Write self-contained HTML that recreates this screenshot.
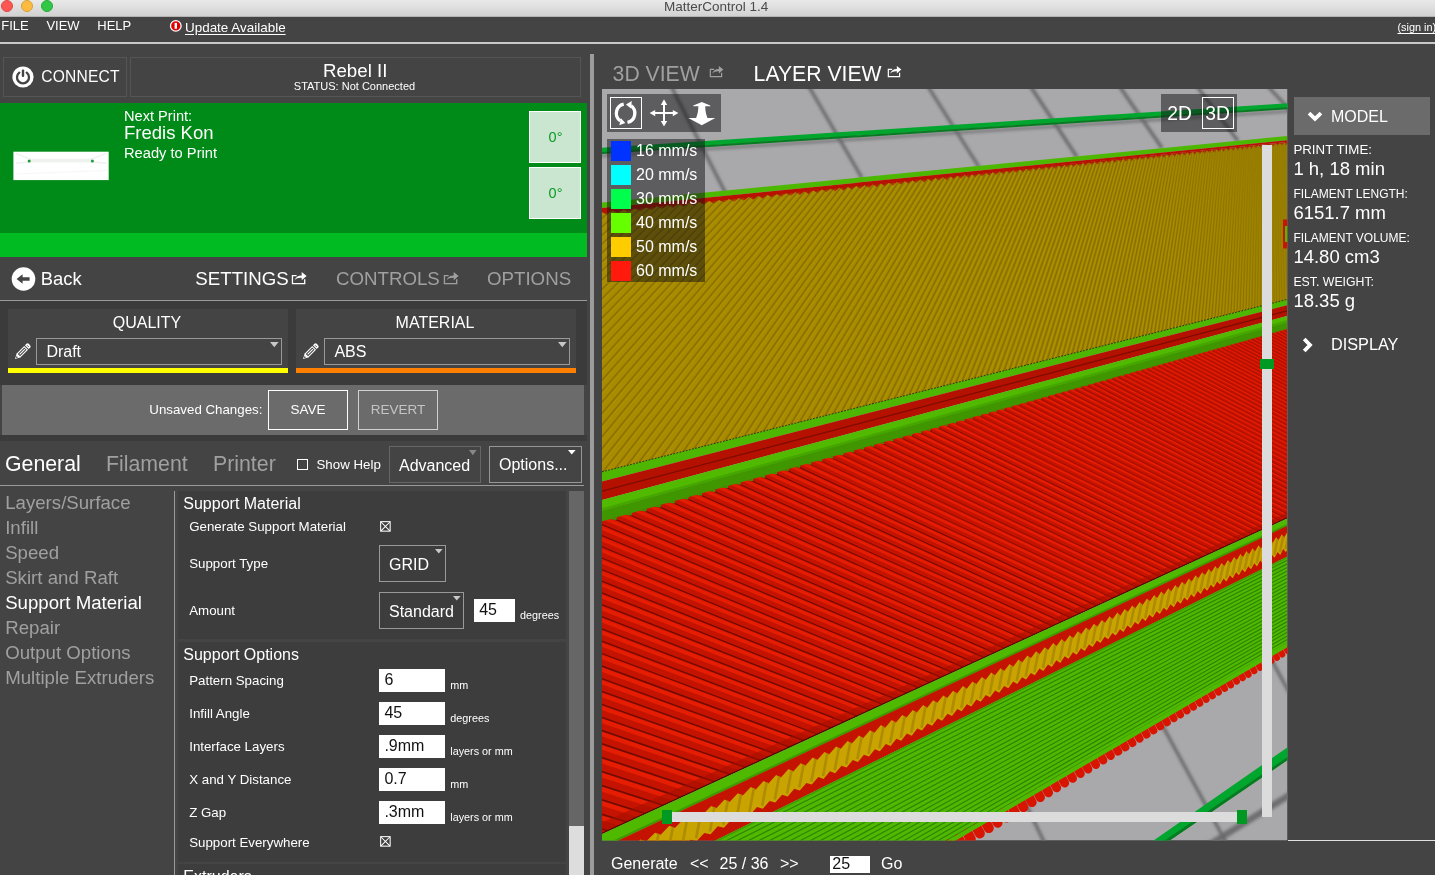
<!DOCTYPE html><html><head><meta charset="utf-8"><title>MatterControl 1.4</title><style>
html,body{margin:0;padding:0;}
body{width:1435px;height:875px;overflow:hidden;background:#444444;font-family:"Liberation Sans",sans-serif;position:relative;}
.t{position:absolute;white-space:nowrap;line-height:1;}
#root{position:absolute;left:0;top:0;width:1435px;height:875px;will-change:transform;}
.r{position:absolute;box-sizing:border-box;}
svg{position:absolute;overflow:visible;}
</style></head><body><div id="root">
<div class="r" style="left:0px;top:0px;width:1435px;height:17px;background:linear-gradient(#e9e9e9,#d2d2d2);border-bottom:1px solid #b4b4b4;height:17px;"></div>
<div class="r" style="left:0.7999999999999998px;top:-0.5px;width:12px;height:12px;border-radius:50%;background:#fc5753;border:0.5px solid #df4744;"></div>
<div class="r" style="left:20.8px;top:-0.5px;width:12px;height:12px;border-radius:50%;background:#fdbc40;border:0.5px solid #de9f34;"></div>
<div class="r" style="left:40.9px;top:-0.5px;width:12px;height:12px;border-radius:50%;background:#33c748;border:0.5px solid #27aa35;"></div>
<div class="t" style="left:416.2px;width:600px;text-align:center;top:-0.13px;font-size:13.5px;color:#4b4b4b;">MatterControl 1.4</div>
<div class="t" style="left:1.3px;top:19.00px;font-size:13px;color:#fff;">FILE</div>
<div class="t" style="left:46.4px;top:19.00px;font-size:13px;color:#fff;">VIEW</div>
<div class="t" style="left:97.3px;top:19.00px;font-size:13px;color:#fff;">HELP</div>
<svg style="left:169px;top:19px" width="14" height="14" viewBox="0 0 14 14"><circle cx="6.8" cy="6.9" r="5.3" fill="#e00000" stroke="#fff" stroke-width="1.3"/><rect x="5.6" y="3.9" width="2.4" height="5.9" fill="#fff"/></svg>
<div class="t" style="left:185.0px;top:20.81px;font-size:13.45px;color:#fff;text-decoration:underline;text-underline-offset:2px;">Update Available</div>
<div class="t" style="left:836.2px;width:600px;text-align:right;top:22.17px;font-size:10.9px;color:#fff;text-decoration:underline;text-underline-offset:1.5px;">(sign in)</div>
<div class="r" style="left:0px;top:42px;width:1435px;height:2px;background:#c8c8c8;"></div>
<div class="r" style="left:3px;top:57px;width:124px;height:40px;border:1px solid #555;"></div>
<div class="r" style="left:130px;top:57px;width:451px;height:40px;border:1px solid #555;"></div>
<svg style="left:11px;top:65px" width="24" height="24" viewBox="0 0 24 24"><circle cx="12" cy="12" r="10.6" fill="#fff"/><path d="M8.3 7.6 A6 6 0 1 0 15.7 7.6" fill="none" stroke="#444" stroke-width="2.3" stroke-linecap="round"/><rect x="10.8" y="4.6" width="2.4" height="7.4" rx="1" fill="#444"/></svg>
<div class="t" style="left:41.2px;top:69.39px;font-size:15.6px;color:#fff;letter-spacing:0.2px;">CONNECT</div>
<div class="t" style="left:55.2px;width:600px;text-align:center;top:62.17px;font-size:18.7px;color:#fff;">Rebel II</div>
<div class="t" style="left:54.5px;width:600px;text-align:center;top:80.69px;font-size:11px;color:#fff;">STATUS: Not Connected</div>
<div class="r" style="left:0px;top:103px;width:587px;height:130px;background:#008a17;"></div>
<div class="r" style="left:0px;top:233px;width:587px;height:24px;background:#00bc22;"></div>
<svg style="left:12px;top:150px" width="98" height="32" viewBox="0 0 98 32"><rect x="1.4" y="1.7" width="95.3" height="28.4" fill="#fff"/><path d="M3.5 3.200 L20 9.800 L78 9.800 L94.500 3.200" stroke="#edf0ed" stroke-width="1.2" fill="none"/><path d="M4 13.200 L22 11.500 L76 11.500 L94 13.200" stroke="#eef1ee" stroke-width="1.6" fill="none"/><path d="M3 24 L95 20.500" stroke="#f3f5f3" stroke-width="0.8" fill="none"/><rect x="18" y="8.600" width="62" height="3.600" fill="#f0f2f0" opacity="0.9"/><circle cx="17.200" cy="11" r="1.5" fill="#1e9a38"/><circle cx="80.400" cy="11" r="1.5" fill="#1e9a38"/></svg>
<div class="t" style="left:124.0px;top:108.54px;font-size:14.6px;color:#fff;">Next Print:</div>
<div class="t" style="left:124.0px;top:124.14px;font-size:18.5px;color:#fff;">Fredis Kon</div>
<div class="t" style="left:124.0px;top:145.56px;font-size:14.7px;color:#fff;">Ready to Print</div>
<div class="r" style="left:529px;top:111px;width:52px;height:52px;background:#cbe6d0;border:1px solid #fff;"></div>
<div class="t" style="left:255.5px;width:600px;text-align:center;top:130.23px;font-size:14.5px;color:#0a9a23;">0&deg;</div>
<div class="r" style="left:529px;top:167px;width:52px;height:52px;background:#cbe6d0;border:1px solid #fff;"></div>
<div class="t" style="left:255.5px;width:600px;text-align:center;top:186.23px;font-size:14.5px;color:#0a9a23;">0&deg;</div>
<div class="r" style="left:590px;top:54px;width:4.3px;height:821px;background:#9c9c9c;"></div>
<svg style="left:11px;top:267px" width="25" height="25" viewBox="0 0 25 25"><circle cx="12.5" cy="12" r="11.8" fill="#fff"/><path d="M5.6 12 L11.6 7.2 L11.6 10.3 L18.6 10.3 L18.6 13.7 L11.6 13.7 L11.6 16.8 Z" fill="#444"/></svg>
<div class="t" style="left:40.7px;top:270.12px;font-size:18.4px;color:#fff;">Back</div>
<div class="t" style="left:195.3px;top:269.87px;font-size:18.7px;color:#fff;">SETTINGS</div>
<div class="t" style="left:336.0px;top:269.87px;font-size:18.7px;color:#a0a0a0;">CONTROLS</div>
<div class="t" style="left:487.0px;top:269.87px;font-size:18.7px;color:#a0a0a0;">OPTIONS</div>
<svg style="left:291.4px;top:270.6px" width="17.0" height="14.0" viewBox="0 0 17 14"><path d="M5.6 4.65 H1.45 V12.55 H13.7 V8.3" fill="none" stroke="#fff" stroke-width="1.3"/><path d="M3.4 9.4 C4.4 6.2 7 4.5 10.7 4.4 V1 L15.6 4.9 L10.7 9.3 V6.9 C8 6.700 5.5 7.300 3.4 9.4 Z" fill="#fff"/></svg>
<svg style="left:442.6px;top:270.6px" width="17.0" height="14.0" viewBox="0 0 17 14"><path d="M5.6 4.65 H1.45 V12.55 H13.7 V8.3" fill="none" stroke="#a0a0a0" stroke-width="1.3"/><path d="M3.4 9.4 C4.4 6.2 7 4.5 10.7 4.4 V1 L15.6 4.9 L10.7 9.3 V6.9 C8 6.700 5.5 7.300 3.4 9.4 Z" fill="#a0a0a0"/></svg>
<div class="r" style="left:0px;top:300px;width:587px;height:1px;background:#9a9a9a;"></div>
<div class="r" style="left:0px;top:301px;width:587px;height:84px;background:#3b3b3b;"></div>
<div class="r" style="left:0px;top:435px;width:587px;height:6px;background:#3b3b3b;"></div>
<div class="r" style="left:8px;top:309px;width:280px;height:59px;background:#444444;"></div>
<div class="r" style="left:8px;top:368px;width:280px;height:5px;background:#ffff00;"></div>
<div class="t" style="left:-153.0px;width:600px;text-align:center;top:315.26px;font-size:16px;color:#fff;">QUALITY</div>
<div class="r" style="left:36px;top:338px;width:246px;height:27px;border:1px solid #999;"></div>
<div class="t" style="left:46.4px;top:343.66px;font-size:16px;color:#fff;">Draft</div>
<svg style="left:269.5px;top:342px" width="9" height="6" viewBox="0 0 9 6"><path d="M0 0 H8.6 L4.3 5.2 Z" fill="#c8c8c8"/></svg>
<svg style="left:15px;top:359.1px" width="1" height="1" viewBox="0 0 1 1"><g transform="rotate(45)"><path d="M0 0 L-2.7 -5.2 L2.7 -5.2 Z" fill="#fff"/><path d="M-1 -3.300 L0 -1.200 L1 -3.300 Z" fill="#444"/><rect x="-2.15" y="-15.2" width="4.3" height="10.2" fill="none" stroke="#fff" stroke-width="1.1"/><path d="M0 -14 V-6.5" stroke="#fff" stroke-width="1.1"/><path d="M-2.7 -16.700 H2.7 V-19 Q2.7 -20.5 0 -20.5 Q-2.7 -20.5 -2.7 -19 Z" fill="#fff"/><path d="M-1.200 -18.300 H1.200" stroke="#555" stroke-width="0.9"/></g></svg>
<div class="r" style="left:296px;top:309px;width:280px;height:59px;background:#444444;"></div>
<div class="r" style="left:296px;top:368px;width:280px;height:5px;background:#ff8000;"></div>
<div class="t" style="left:135.0px;width:600px;text-align:center;top:315.26px;font-size:16px;color:#fff;">MATERIAL</div>
<div class="r" style="left:324px;top:338px;width:246px;height:27px;border:1px solid #999;"></div>
<div class="t" style="left:334.4px;top:343.66px;font-size:16px;color:#fff;">ABS</div>
<svg style="left:557.5px;top:342px" width="9" height="6" viewBox="0 0 9 6"><path d="M0 0 H8.6 L4.3 5.2 Z" fill="#c8c8c8"/></svg>
<svg style="left:303px;top:359.1px" width="1" height="1" viewBox="0 0 1 1"><g transform="rotate(45)"><path d="M0 0 L-2.7 -5.2 L2.7 -5.2 Z" fill="#fff"/><path d="M-1 -3.300 L0 -1.200 L1 -3.300 Z" fill="#444"/><rect x="-2.15" y="-15.2" width="4.3" height="10.2" fill="none" stroke="#fff" stroke-width="1.1"/><path d="M0 -14 V-6.5" stroke="#fff" stroke-width="1.1"/><path d="M-2.7 -16.700 H2.7 V-19 Q2.7 -20.5 0 -20.5 Q-2.7 -20.5 -2.7 -19 Z" fill="#fff"/><path d="M-1.200 -18.300 H1.200" stroke="#555" stroke-width="0.9"/></g></svg>
<div class="r" style="left:2px;top:385px;width:582px;height:50px;background:#6b6b6b;"></div>
<div class="t" style="left:149.3px;top:402.74px;font-size:13.3px;color:#fff;">Unsaved Changes:</div>
<div class="r" style="left:268px;top:390px;width:80px;height:40px;border:1px solid #fff;"></div>
<div class="t" style="left:8.0px;width:600px;text-align:center;top:402.57px;font-size:13.5px;color:#fff;">SAVE</div>
<div class="r" style="left:358px;top:390px;width:80px;height:40px;border:1px solid #d0d0d0;"></div>
<div class="t" style="left:98.0px;width:600px;text-align:center;top:402.57px;font-size:13.5px;color:#c4c4c4;">REVERT</div>
<div class="t" style="left:5.0px;top:454.37px;font-size:21.3px;color:#fff;">General</div>
<div class="t" style="left:106.0px;top:454.37px;font-size:21.3px;color:#a0a0a0;">Filament</div>
<div class="t" style="left:213.0px;top:454.37px;font-size:21.3px;color:#a0a0a0;">Printer</div>
<div class="r" style="left:297px;top:459px;width:10.5px;height:10.5px;border:1px solid #fff;"></div>
<div class="t" style="left:316.5px;top:457.74px;font-size:13.3px;color:#fff;">Show Help</div>
<div class="r" style="left:389px;top:445.5px;width:92px;height:37px;border:1px solid #666;"></div>
<div class="t" style="left:399.0px;top:458.46px;font-size:16px;color:#fff;">Advanced</div>
<svg style="left:469.4px;top:450px" width="8" height="6" viewBox="0 0 8 6"><path d="M0 0 H7.6 L3.8 5.2 Z" fill="#888"/></svg>
<div class="r" style="left:489px;top:445.5px;width:92.5px;height:37px;border:1px solid #969696;"></div>
<div class="t" style="left:499.0px;top:456.96px;font-size:16px;color:#fff;">Options...</div>
<svg style="left:567.5px;top:449.5px" width="8" height="5" viewBox="0 0 8 5"><path d="M0 0 H7.6 L3.8 4.6 Z" fill="#fff"/></svg>
<div class="r" style="left:0px;top:485px;width:584px;height:1px;background:#9a9a9a;"></div>
<div class="t" style="left:5.2px;top:493.51px;font-size:18.65px;color:#a0a0a0;">Layers/Surface</div>
<div class="t" style="left:5.2px;top:518.51px;font-size:18.65px;color:#a0a0a0;">Infill</div>
<div class="t" style="left:5.2px;top:543.51px;font-size:18.65px;color:#a0a0a0;">Speed</div>
<div class="t" style="left:5.2px;top:568.51px;font-size:18.65px;color:#a0a0a0;">Skirt and Raft</div>
<div class="t" style="left:5.2px;top:593.51px;font-size:18.65px;color:#fff;">Support Material</div>
<div class="t" style="left:5.2px;top:618.51px;font-size:18.65px;color:#a0a0a0;">Repair</div>
<div class="t" style="left:5.2px;top:643.51px;font-size:18.65px;color:#a0a0a0;">Output Options</div>
<div class="t" style="left:5.2px;top:668.51px;font-size:18.65px;color:#a0a0a0;">Multiple Extruders</div>
<div class="r" style="left:173.8px;top:491px;width:1.4px;height:384px;background:#9a9a9a;"></div>
<div class="r" style="left:178px;top:491px;width:388px;height:148px;background:#3d3d3d;"></div>
<div class="r" style="left:178px;top:642px;width:388px;height:219.5px;background:#3d3d3d;"></div>
<div class="r" style="left:178px;top:864px;width:388px;height:11px;background:#3d3d3d;"></div>
<div class="t" style="left:183.3px;top:495.86px;font-size:16px;color:#fff;">Support Material</div>
<div class="t" style="left:183.3px;top:646.66px;font-size:16px;color:#fff;">Support Options</div>
<div class="t" style="left:183.3px;top:868.96px;font-size:16px;color:#fff;">Extruders</div>
<div class="t" style="left:189.2px;top:520.34px;font-size:13.3px;color:#fff;">Generate Support Material</div>
<svg style="left:379.5px;top:520.8px" width="11" height="11" viewBox="0 0 11 11"><rect x="0.65" y="0.65" width="9.5" height="9.5" fill="none" stroke="#fff" stroke-width="1.05"/><path d="M1 1 L9.8 9.8 M9.8 1 L1 9.8" stroke="#fff" stroke-width="1.05"/></svg>
<div class="t" style="left:189.2px;top:557.34px;font-size:13.3px;color:#fff;">Support Type</div>
<div class="r" style="left:379px;top:545px;width:67px;height:36.6px;border:1px solid #999;"></div>
<div class="t" style="left:389.0px;top:556.66px;font-size:16px;color:#fff;">GRID</div>
<svg style="left:434.5px;top:549px" width="8" height="5" viewBox="0 0 8 5"><path d="M0 0 H7.6 L3.8 4.6 Z" fill="#c8c8c8"/></svg>
<div class="t" style="left:189.2px;top:604.24px;font-size:13.3px;color:#fff;">Amount</div>
<div class="r" style="left:379px;top:592px;width:85px;height:36.6px;border:1px solid #999;"></div>
<div class="t" style="left:389.0px;top:603.66px;font-size:16px;color:#fff;">Standard</div>
<svg style="left:452.5px;top:596px" width="8" height="5" viewBox="0 0 8 5"><path d="M0 0 H7.6 L3.8 4.6 Z" fill="#c8c8c8"/></svg>
<div class="r" style="left:473.6px;top:598.7px;width:41.5px;height:23px;background:#fff;"></div>
<div class="t" style="left:479.2px;top:602.36px;font-size:16px;color:#111;">45</div>
<div class="t" style="left:520.1px;top:610.06px;font-size:10.8px;color:#fff;">degrees</div>
<div class="t" style="left:189.2px;top:673.94px;font-size:13.3px;color:#fff;">Pattern Spacing</div>
<div class="r" style="left:378.8px;top:668.7px;width:66.5px;height:23px;background:#fff;"></div>
<div class="t" style="left:384.4px;top:672.36px;font-size:16px;color:#111;">6</div>
<div class="t" style="left:450.3px;top:680.06px;font-size:10.8px;color:#fff;">mm</div>
<div class="t" style="left:189.2px;top:706.94px;font-size:13.3px;color:#fff;">Infill Angle</div>
<div class="r" style="left:378.8px;top:701.7px;width:66.5px;height:23px;background:#fff;"></div>
<div class="t" style="left:384.4px;top:705.36px;font-size:16px;color:#111;">45</div>
<div class="t" style="left:450.3px;top:713.06px;font-size:10.8px;color:#fff;">degrees</div>
<div class="t" style="left:189.2px;top:739.94px;font-size:13.3px;color:#fff;">Interface Layers</div>
<div class="r" style="left:378.8px;top:734.7px;width:66.5px;height:23px;background:#fff;"></div>
<div class="t" style="left:384.4px;top:738.36px;font-size:16px;color:#111;">.9mm</div>
<div class="t" style="left:450.3px;top:746.06px;font-size:10.8px;color:#fff;">layers or mm</div>
<div class="t" style="left:189.2px;top:772.94px;font-size:13.3px;color:#fff;">X and Y Distance</div>
<div class="r" style="left:378.8px;top:767.7px;width:66.5px;height:23px;background:#fff;"></div>
<div class="t" style="left:384.4px;top:771.36px;font-size:16px;color:#111;">0.7</div>
<div class="t" style="left:450.3px;top:779.06px;font-size:10.8px;color:#fff;">mm</div>
<div class="t" style="left:189.2px;top:805.94px;font-size:13.3px;color:#fff;">Z Gap</div>
<div class="r" style="left:378.8px;top:800.7px;width:66.5px;height:23px;background:#fff;"></div>
<div class="t" style="left:384.4px;top:804.36px;font-size:16px;color:#111;">.3mm</div>
<div class="t" style="left:450.3px;top:812.06px;font-size:10.8px;color:#fff;">layers or mm</div>
<div class="t" style="left:189.2px;top:835.74px;font-size:13.3px;color:#fff;">Support Everywhere</div>
<svg style="left:379.5px;top:836.3px" width="11" height="11" viewBox="0 0 11 11"><rect x="0.65" y="0.65" width="9.5" height="9.5" fill="none" stroke="#fff" stroke-width="1.05"/><path d="M1 1 L9.8 9.8 M9.8 1 L1 9.8" stroke="#fff" stroke-width="1.05"/></svg>
<div class="r" style="left:569.3px;top:491px;width:14.7px;height:384px;background:#666666;"></div>
<div class="r" style="left:569.3px;top:826px;width:14.7px;height:49px;background:#dddddd;"></div>
<div class="t" style="left:612.6px;top:62.85px;font-size:21.2px;color:#a0a0a0;">3D VIEW</div>
<svg style="left:709.3px;top:65.4px" width="15.64" height="12.88" viewBox="0 0 17 14"><path d="M5.6 4.65 H1.45 V12.55 H13.7 V8.3" fill="none" stroke="#a0a0a0" stroke-width="1.3"/><path d="M3.4 9.4 C4.4 6.2 7 4.5 10.7 4.4 V1 L15.6 4.9 L10.7 9.3 V6.9 C8 6.700 5.5 7.300 3.4 9.4 Z" fill="#a0a0a0"/></svg>
<div class="t" style="left:753.6px;top:62.85px;font-size:21.2px;color:#fff;">LAYER VIEW</div>
<svg style="left:887.2px;top:65.4px" width="15.64" height="12.88" viewBox="0 0 17 14"><path d="M5.6 4.65 H1.45 V12.55 H13.7 V8.3" fill="none" stroke="#fff" stroke-width="1.3"/><path d="M3.4 9.4 C4.4 6.2 7 4.5 10.7 4.4 V1 L15.6 4.9 L10.7 9.3 V6.9 C8 6.700 5.5 7.300 3.4 9.4 Z" fill="#fff"/></svg>
<svg style="left:602.0px;top:89.0px" width="685.5" height="751.5" viewBox="602.0 89.0 685.5 751.5">
<defs>
<clipPath id="vp"><rect x="602.0" y="89.0" width="685.5" height="751.5"/></clipPath>
<clipPath id="cy"><path d="M602 212.5 L1287 143 L1287 299.5 L602 471.8 Z"/></clipPath>
<clipPath id="cr"><path d="M602 521.2 L1287 328.7 L1287 518 L602 833.5 Z"/></clipPath>
<clipPath id="cg"><path d="M602 896.8 L1287 556.8 L1287 646.9 L602 1046.1 Z"/></clipPath>
<clipPath id="cyb"><path d="M602 848.2 L1287 526 L1287 556.8 L602 896.8 Z"/></clipPath>
<filter id="bl" x="-5%" y="-5%" width="110%" height="110%"><feGaussianBlur stdDeviation="1.5"/></filter>
<linearGradient id="gg" gradientUnits="userSpaceOnUse" x1="0" y1="0" x2="2.5" y2="10"><stop offset="0" stop-color="#57c200"/><stop offset="1" stop-color="#46a600"/></linearGradient>
<linearGradient id="rg" gradientUnits="userSpaceOnUse" x1="602.0" y1="700" x2="1287.0" y2="420"><stop offset="0" stop-color="#860e00"/><stop offset="1" stop-color="#b41200"/></linearGradient>
</defs>
<g clip-path="url(#vp)">
<rect x="602.0" y="89.0" width="685.5" height="751.5" fill="#a9a8ab"/>
<g filter="url(#bl)" stroke="#68686a" stroke-width="3.2" fill="none">
<path d="M670.5 85 L727 196"/>
<path d="M808 85 L862 178"/>
<path d="M927 85 L979 167"/>
<path d="M1029.6 85 L1077 157"/>
<path d="M1118.6 85 L1162 148"/>
<path d="M1196 85 L1238 141"/>
<path d="M1266.6 85 L1290 110"/>
<path d="M598 156 L1290 111.2" stroke-width="2.6" opacity="0.8"/>
<path d="M1154 710 L1228 846"/>
<path d="M1020 792 L1046 846"/>
<path d="M1292 793.600 L1208 845.500" stroke-width="6.5" opacity="0.900"/>
<path d="M1254 628 L1306 723"/>
</g>
<path d="M598 152.600 L1290 107.600 L1290 103 L598 148 Z" fill="#00a62e"/>
<path d="M598 154.200 L1290 109.200 L1290 107.200 L598 152.200 Z" fill="#0a7a22"/>
<path d="M1290 745.500 L1290 758.500 L1166 843 L1150 843 Z" fill="#00a62e"/>
<path d="M1290 755.500 L1290 758.500 L1166 843 L1161 843 Z" fill="#0a7a22"/>
<polygon points="602,202.5 1287,136 1287,140.2 602,208" fill="#4db800" />
<polygon points="602,208 1287,140.2 1287,142 602,211.5" fill="#b81200" />
<polygon points="602,212 1287,142.5 1287,299.5 602,471.8" fill="#a88b00" />
<path d="M597 210.5L560 219.2L566 215.6L572 217.9L577.9 214.3L583.8 216.7L589.6 213.2L595.4 215.6L601.2 212L606.9 214.4L612.6 210.8L618.3 213.2L623.9 209.7L629.5 212.1L635 208.5L640.6 211L646 207.4L651.5 209.9L656.9 206.3L662.2 208.8L667.6 205.2L672.9 207.7L678.1 204.2L683.4 206.6L688.6 203.1L693.8 205.6L698.9 202.1L704 204.6L709.1 201L714.1 203.5L719.1 200L724.1 202.5L729 199L734 201.5L738.8 198L743.7 200.5L748.5 197L753.3 199.5L758.1 196.1L762.8 198.6L767.5 195.1L772.2 197.6L776.9 194.2L781.5 196.7L786.1 193.2L790.7 195.8L795.2 192.3L799.8 194.8L804.3 191.4L808.7 193.9L813.2 190.5L817.6 193L822 189.6L826.4 192.1L830.7 188.7L835 191.3L839.3 187.8L843.6 190.4L847.8 187L852 189.5L856.2 186.1L860.4 188.7L864.5 185.3L868.7 187.8L872.8 184.4L876.8 187L880.9 183.6L884.9 186.2L888.9 182.8L892.9 185.4L896.9 182L900.8 184.6L904.7 181.2L908.7 183.8L912.5 180.4L916.4 183L920.2 179.6L924.1 182.2L927.8 178.8L931.6 181.5L935.4 178.1L939.1 180.7L942.8 177.3L946.5 179.9L950.2 176.6L953.9 179.2L957.5 175.8L961.1 178.5L964.7 175.1L968.3 177.7L971.9 174.4L975.4 177L978.9 173.7L982.4 176.3L985.9 172.9L989.4 175.6L992.8 172.2L996.3 174.9L999.7 171.5L1003.1 174.2L1006.5 170.9L1009.9 173.5L1013.2 170.2L1016.5 172.8L1019.8 169.5L1023.2 172.2L1026.4 168.8L1029.7 171.5L1032.9 168.2L1036.2 170.8L1039.4 167.5L1042.6 170.2L1045.8 166.9L1049 169.6L1052.1 166.2L1055.3 168.9L1058.4 165.6L1061.5 168.3L1064.6 165L1067.7 167.7L1070.7 164.3L1073.8 167L1076.8 163.7L1079.8 166.4L1082.8 163.1L1085.8 165.8L1088.8 162.5L1091.8 165.2L1094.7 161.9L1097.6 164.6L1100.6 161.3L1103.5 164L1106.4 160.7L1109.2 163.4L1112.1 160.1L1115 162.9L1117.8 159.6L1120.6 162.3L1123.4 159L1126.2 161.7L1129 158.4L1131.8 161.1L1134.6 157.9L1137.3 160.6L1140 157.3L1142.8 160L1145.5 156.8L1148.2 159.5L1150.9 156.2L1153.6 158.9L1156.2 155.7L1158.9 158.4L1161.5 155.1L1164.1 157.9L1166.7 154.6L1169.4 157.3L1171.9 154.1L1174.5 156.8L1177.1 153.6L1179.7 156.3L1182.2 153L1184.7 155.8L1187.3 152.5L1189.8 155.3L1192.3 152L1194.8 154.8L1197.2 151.5L1199.7 154.3L1202.2 151L1204.6 153.8L1207.1 150.5L1209.5 153.3L1211.9 150L1214.3 152.8L1216.7 149.5L1219.1 152.3L1221.5 149L1223.8 151.8L1226.2 148.6L1228.5 151.3L1230.9 148.1L1233.2 150.9L1235.5 147.6L1237.8 150.4L1240.1 147.2L1242.4 149.9L1244.7 146.7L1247 149.5L1249.2 146.2L1251.5 149L1253.7 145.8L1255.9 148.6L1258.2 145.3L1260.4 148.1L1262.6 144.9L1264.8 147.7L1267 144.4L1269.1 147.2L1271.3 144L1273.5 146.8L1275.6 143.6L1277.8 146.3L1279.9 143.1L1282 145.9L1284.1 142.7L1286.2 145.5L1288.3 142.3L1290.4 145.1L1292.5 141.8L1294.6 144.6L1296.6 141.4L1298.7 144.2L1300.8 141L1292 141.7Z" fill="#b81200"/>
<g clip-path="url(#cy)"><path d="M-0.6 520L599.8 100M17.6 520L609.4 100M35.5 520L618.8 100M53.1 520L628.1 100M70.4 520L637.2 100M87.5 520L646.2 100M104.3 520L655 100M120.9 520L663.7 100M137.2 520L672.3 100M153.2 520L680.7 100M169.1 520L689.1 100M184.7 520L697.3 100M200 520L705.3 100M215.2 520L713.3 100M230.1 520L721.2 100M244.8 520L728.9 100M259.3 520L736.5 100M273.6 520L744 100M287.7 520L751.4 100M301.6 520L758.7 100M315.3 520L766 100M328.8 520L773.1 100M342.1 520L780.1 100M355.3 520L787 100M368.2 520L793.8 100M381 520L800.5 100M393.7 520L807.2 100M406.1 520L813.7 100M418.4 520L820.2 100M430.6 520L826.6 100M442.5 520L832.9 100M454.4 520L839.1 100M466 520L845.3 100M477.6 520L851.3 100M488.9 520L857.3 100M500.2 520L863.2 100M511.3 520L869.1 100M522.2 520L874.8 100M533.1 520L880.5 100M543.8 520L886.1 100M554.3 520L891.7 100M564.8 520L897.2 100M575.1 520L902.6 100M585.3 520L908 100M595.3 520L913.3 100M605.3 520L918.5 100M615.1 520L923.7 100M624.8 520L928.8 100M634.4 520L933.8 100M643.9 520L938.8 100M653.3 520L943.8 100M662.6 520L948.6 100M671.8 520L953.5 100M680.9 520L958.2 100M689.8 520L963 100M698.7 520L967.6 100M707.5 520L972.2 100M716.1 520L976.8 100M724.7 520L981.3 100M733.2 520L985.8 100M741.6 520L990.2 100M749.9 520L994.6 100M758.1 520L998.9 100M766.3 520L1003.2 100M774.3 520L1007.4 100M782.3 520L1011.6 100M790.1 520L1015.7 100M797.9 520L1019.8 100M805.6 520L1023.9 100M813.3 520L1027.9 100M820.8 520L1031.8 100M828.3 520L1035.8 100M835.7 520L1039.7 100M843 520L1043.5 100M850.3 520L1047.3 100M857.4 520L1051.1 100M864.5 520L1054.9 100M871.6 520L1058.6 100M878.6 520L1062.2 100M885.5 520L1065.8 100M892.3 520L1069.4 100M899 520L1073 100M905.7 520L1076.5 100M912.4 520L1080 100M919 520L1083.5 100M925.5 520L1086.9 100M931.9 520L1090.3 100M938.3 520L1093.6 100M944.6 520L1097 100M950.9 520L1100.3 100M957.1 520L1103.5 100M963.3 520L1106.8 100M969.3 520L1110 100M975.4 520L1113.1 100M981.4 520L1116.3 100M987.3 520L1119.4 100M993.2 520L1122.5 100M999 520L1125.6 100M1004.8 520L1128.6 100M1010.5 520L1131.6 100M1016.2 520L1134.6 100M1021.8 520L1137.5 100M1027.3 520L1140.5 100M1032.9 520L1143.4 100M1038.3 520L1146.3 100M1043.8 520L1149.1 100M1049.1 520L1151.9 100M1054.5 520L1154.7 100M1059.7 520L1157.5 100M1065 520L1160.3 100M1070.2 520L1163 100M1075.3 520L1165.7 100M1080.4 520L1168.4 100M1085.5 520L1171.1 100M1090.5 520L1173.7 100M1095.5 520L1176.3 100M1100.4 520L1178.9 100M1105.3 520L1181.5 100M1110.2 520L1184.1 100M1115 520L1186.6 100M1119.8 520L1189.1 100M1124.5 520L1191.6 100M1129.2 520L1194.1 100M1133.9 520L1196.5 100M1138.5 520L1199 100M1143.1 520L1201.4 100M1147.7 520L1203.8 100M1152.2 520L1206.1 100M1156.7 520L1208.5 100M1161.1 520L1210.8 100M1165.5 520L1213.1 100M1169.9 520L1215.5 100M1174.2 520L1217.7 100M1178.5 520L1220 100M1182.8 520L1222.2 100M1187.1 520L1224.5 100M1191.3 520L1226.7 100M1195.4 520L1228.9 100M1199.6 520L1231.1 100M1203.7 520L1233.2 100M1207.8 520L1235.4 100M1211.8 520L1237.5 100M1215.9 520L1239.6 100M1219.9 520L1241.7 100M1223.8 520L1243.8 100M1227.8 520L1245.9 100M1231.7 520L1247.9 100M1235.5 520L1250 100M1239.4 520L1252 100M1243.2 520L1254 100M1247 520L1256 100M1250.8 520L1258 100M1254.5 520L1259.9 100M1258.2 520L1261.9 100M1261.9 520L1263.8 100M1265.5 520L1265.8 100M1269.2 520L1267.7 100M1272.8 520L1269.6 100M1276.4 520L1271.4 100M1279.9 520L1273.3 100M1283.4 520L1275.2 100M1286.9 520L1277 100M1290.4 520L1278.8 100M1293.9 520L1280.7 100M1297.3 520L1282.5 100M1300.7 520L1284.3 100M1304.1 520L1286 100M1307.5 520L1287.8 100M1310.8 520L1289.6 100M1314.1 520L1291.3 100" stroke="#806800" stroke-width="2.3" fill="none" opacity="0.42"/><path d="M-0.6 520L599.8 100M17.6 520L609.4 100M35.5 520L618.8 100M53.1 520L628.1 100M70.4 520L637.2 100M87.5 520L646.2 100M104.3 520L655 100M120.9 520L663.7 100M137.2 520L672.3 100M153.2 520L680.7 100M169.1 520L689.1 100M184.7 520L697.3 100M200 520L705.3 100M215.2 520L713.3 100M230.1 520L721.2 100M244.8 520L728.9 100M259.3 520L736.5 100M273.6 520L744 100M287.7 520L751.4 100M301.6 520L758.7 100M315.3 520L766 100M328.8 520L773.1 100M342.1 520L780.1 100M355.3 520L787 100M368.2 520L793.8 100M381 520L800.5 100M393.7 520L807.2 100M406.1 520L813.7 100M418.4 520L820.2 100M430.6 520L826.6 100M442.5 520L832.9 100M454.4 520L839.1 100M466 520L845.3 100M477.6 520L851.3 100M488.9 520L857.3 100M500.2 520L863.2 100M511.3 520L869.1 100M522.2 520L874.8 100M533.1 520L880.5 100M543.8 520L886.1 100M554.3 520L891.7 100M564.8 520L897.2 100M575.1 520L902.6 100M585.3 520L908 100M595.3 520L913.3 100M605.3 520L918.5 100M615.1 520L923.7 100M624.8 520L928.8 100M634.4 520L933.8 100M643.9 520L938.8 100M653.3 520L943.8 100M662.6 520L948.6 100M671.8 520L953.5 100M680.9 520L958.2 100M689.8 520L963 100M698.7 520L967.6 100M707.5 520L972.2 100M716.1 520L976.8 100M724.7 520L981.3 100M733.2 520L985.8 100M741.6 520L990.2 100M749.9 520L994.6 100M758.1 520L998.9 100M766.3 520L1003.2 100M774.3 520L1007.4 100M782.3 520L1011.6 100M790.1 520L1015.7 100M797.9 520L1019.8 100M805.6 520L1023.9 100M813.3 520L1027.9 100M820.8 520L1031.8 100M828.3 520L1035.8 100M835.7 520L1039.7 100M843 520L1043.5 100M850.3 520L1047.3 100M857.4 520L1051.1 100M864.5 520L1054.9 100M871.6 520L1058.6 100M878.6 520L1062.2 100M885.5 520L1065.8 100M892.3 520L1069.4 100M899 520L1073 100M905.7 520L1076.5 100M912.4 520L1080 100M919 520L1083.5 100M925.5 520L1086.9 100M931.9 520L1090.3 100M938.3 520L1093.6 100M944.6 520L1097 100M950.9 520L1100.3 100M957.1 520L1103.5 100M963.3 520L1106.8 100M969.3 520L1110 100M975.4 520L1113.1 100M981.4 520L1116.3 100M987.3 520L1119.4 100M993.2 520L1122.5 100M999 520L1125.6 100M1004.8 520L1128.6 100M1010.5 520L1131.6 100M1016.2 520L1134.6 100M1021.8 520L1137.5 100M1027.3 520L1140.5 100M1032.9 520L1143.4 100M1038.3 520L1146.3 100M1043.8 520L1149.1 100M1049.1 520L1151.9 100M1054.5 520L1154.7 100M1059.7 520L1157.5 100M1065 520L1160.3 100M1070.2 520L1163 100M1075.3 520L1165.7 100M1080.4 520L1168.4 100M1085.5 520L1171.1 100M1090.5 520L1173.7 100M1095.5 520L1176.3 100M1100.4 520L1178.9 100M1105.3 520L1181.5 100M1110.2 520L1184.1 100M1115 520L1186.6 100M1119.8 520L1189.1 100M1124.5 520L1191.6 100M1129.2 520L1194.1 100M1133.9 520L1196.5 100M1138.5 520L1199 100M1143.1 520L1201.4 100M1147.7 520L1203.8 100M1152.2 520L1206.1 100M1156.7 520L1208.5 100M1161.1 520L1210.8 100M1165.5 520L1213.1 100M1169.9 520L1215.5 100M1174.2 520L1217.7 100M1178.5 520L1220 100M1182.8 520L1222.2 100M1187.1 520L1224.5 100M1191.3 520L1226.7 100M1195.4 520L1228.9 100M1199.6 520L1231.1 100M1203.7 520L1233.2 100M1207.8 520L1235.4 100M1211.8 520L1237.5 100M1215.9 520L1239.6 100M1219.9 520L1241.7 100M1223.8 520L1243.8 100M1227.8 520L1245.9 100M1231.7 520L1247.9 100M1235.5 520L1250 100M1239.4 520L1252 100M1243.2 520L1254 100M1247 520L1256 100M1250.8 520L1258 100M1254.5 520L1259.9 100M1258.2 520L1261.9 100M1261.9 520L1263.8 100M1265.5 520L1265.8 100M1269.2 520L1267.7 100M1272.8 520L1269.6 100M1276.4 520L1271.4 100M1279.9 520L1273.3 100M1283.4 520L1275.2 100M1286.9 520L1277 100M1290.4 520L1278.8 100M1293.9 520L1280.7 100M1297.3 520L1282.5 100M1300.7 520L1284.3 100M1304.1 520L1286 100M1307.5 520L1287.8 100M1310.8 520L1289.6 100M1314.1 520L1291.3 100" stroke="#6e5a00" stroke-width="0.8" fill="none" opacity="0.5"/><path d="M-0.6 520L599.8 100M17.6 520L609.4 100M35.5 520L618.8 100M53.1 520L628.1 100M70.4 520L637.2 100M87.5 520L646.2 100M104.3 520L655 100M120.9 520L663.7 100M137.2 520L672.3 100M153.2 520L680.7 100M169.1 520L689.1 100M184.7 520L697.3 100M200 520L705.3 100M215.2 520L713.3 100M230.1 520L721.2 100M244.8 520L728.9 100M259.3 520L736.5 100M273.6 520L744 100M287.7 520L751.4 100M301.6 520L758.7 100M315.3 520L766 100M328.8 520L773.1 100M342.1 520L780.1 100M355.3 520L787 100M368.2 520L793.8 100M381 520L800.5 100M393.7 520L807.2 100M406.1 520L813.7 100M418.4 520L820.2 100M430.6 520L826.6 100M442.5 520L832.9 100M454.4 520L839.1 100M466 520L845.3 100M477.6 520L851.3 100M488.9 520L857.3 100M500.2 520L863.2 100M511.3 520L869.1 100M522.2 520L874.8 100M533.1 520L880.5 100M543.8 520L886.1 100M554.3 520L891.7 100M564.8 520L897.2 100M575.1 520L902.6 100M585.3 520L908 100M595.3 520L913.3 100M605.3 520L918.5 100M615.1 520L923.7 100M624.8 520L928.8 100M634.4 520L933.8 100M643.9 520L938.8 100M653.3 520L943.8 100M662.6 520L948.6 100M671.8 520L953.5 100M680.9 520L958.2 100M689.8 520L963 100M698.7 520L967.6 100M707.5 520L972.2 100M716.1 520L976.8 100M724.7 520L981.3 100M733.2 520L985.8 100M741.6 520L990.2 100M749.9 520L994.6 100M758.1 520L998.9 100M766.3 520L1003.2 100M774.3 520L1007.4 100M782.3 520L1011.6 100M790.1 520L1015.7 100M797.9 520L1019.8 100M805.6 520L1023.9 100M813.3 520L1027.9 100M820.8 520L1031.8 100M828.3 520L1035.8 100M835.7 520L1039.7 100M843 520L1043.5 100M850.3 520L1047.3 100M857.4 520L1051.1 100M864.5 520L1054.9 100M871.6 520L1058.6 100M878.6 520L1062.2 100M885.5 520L1065.8 100M892.3 520L1069.4 100M899 520L1073 100M905.7 520L1076.5 100M912.4 520L1080 100M919 520L1083.5 100M925.5 520L1086.9 100M931.9 520L1090.3 100M938.3 520L1093.6 100M944.6 520L1097 100M950.9 520L1100.3 100M957.1 520L1103.5 100M963.3 520L1106.8 100M969.3 520L1110 100M975.4 520L1113.1 100M981.4 520L1116.3 100M987.3 520L1119.4 100M993.2 520L1122.5 100M999 520L1125.6 100M1004.8 520L1128.6 100M1010.5 520L1131.6 100M1016.2 520L1134.6 100M1021.8 520L1137.5 100M1027.3 520L1140.5 100M1032.9 520L1143.4 100M1038.3 520L1146.3 100M1043.8 520L1149.1 100M1049.1 520L1151.9 100M1054.5 520L1154.7 100M1059.7 520L1157.5 100M1065 520L1160.3 100M1070.2 520L1163 100M1075.3 520L1165.7 100M1080.4 520L1168.4 100M1085.5 520L1171.1 100M1090.5 520L1173.7 100M1095.5 520L1176.3 100M1100.4 520L1178.9 100M1105.3 520L1181.5 100M1110.2 520L1184.1 100M1115 520L1186.6 100M1119.8 520L1189.1 100M1124.5 520L1191.6 100M1129.2 520L1194.1 100M1133.9 520L1196.5 100M1138.5 520L1199 100M1143.1 520L1201.4 100M1147.7 520L1203.8 100M1152.2 520L1206.1 100M1156.7 520L1208.5 100M1161.1 520L1210.8 100M1165.5 520L1213.1 100M1169.9 520L1215.5 100M1174.2 520L1217.7 100M1178.5 520L1220 100M1182.8 520L1222.2 100M1187.1 520L1224.5 100M1191.3 520L1226.7 100M1195.4 520L1228.9 100M1199.6 520L1231.1 100M1203.7 520L1233.2 100M1207.8 520L1235.4 100M1211.8 520L1237.5 100M1215.9 520L1239.6 100M1219.9 520L1241.7 100M1223.8 520L1243.8 100M1227.8 520L1245.9 100M1231.7 520L1247.9 100M1235.5 520L1250 100M1239.4 520L1252 100M1243.2 520L1254 100M1247 520L1256 100M1250.8 520L1258 100M1254.5 520L1259.9 100M1258.2 520L1261.9 100M1261.9 520L1263.8 100M1265.5 520L1265.8 100M1269.2 520L1267.7 100M1272.8 520L1269.6 100M1276.4 520L1271.4 100M1279.9 520L1273.3 100M1283.4 520L1275.2 100M1286.9 520L1277 100M1290.4 520L1278.8 100M1293.9 520L1280.7 100M1297.3 520L1282.5 100M1300.7 520L1284.3 100M1304.1 520L1286 100M1307.5 520L1287.8 100M1310.8 520L1289.6 100M1314.1 520L1291.3 100" stroke="#b89a00" stroke-width="1.4" fill="none" opacity="0.35" transform="translate(2.2,0)"/></g>
<polygon points="602,471.8 1287,299.5 1287,305.3 602,481.5" fill="#4db600" />
<polygon points="602,481.5 1287,305.3 1287,316 602,500" fill="#b51100" />
<path d="M602.0 491.1 L1287.0 310.9" stroke="#7d0b00" stroke-width="1.2"/>
<polygon points="602,500 1287,316 1287,322 602,510.5" fill="#50b900" />
<polygon points="602,510.5 1287,322 1287,335 602,527.5" fill="#3f9600" />
<path d="M602.0 509.5 L1287.0 321.4" stroke="#46a600" stroke-width="2.5"/>
<path d="M602.0 471.8 L1287.0 299.5" stroke="#2a2400" stroke-width="0.9" stroke-dasharray="1.8 1.4"/>
<polygon points="602,521.5 1287,329 1287,518 602,833.5" fill="#dc1600" />
<g clip-path="url(#cr)" fill="none">
<path d="M1380.2 302.2L2880.2 1107M1383 301.4L2883 1106.6M1385.7 300.7L2885.7 1106.1M1388.4 299.9L2888.4 1105.6M1391.1 299.2L2891.1 1105.2M1393.8 298.4L2893.8 1104.7M1396.4 297.7L2896.4 1104.2M1399 297L2899 1103.8M1401.6 296.2L2901.6 1103.3M1404.1 295.5L2904.1 1102.9M1406.7 294.8L2906.7 1102.5M1409.2 294.1L2909.2 1102M1411.7 293.4L2911.7 1101.6M1414.1 292.7L2914.1 1101.2M1416.6 292.1L2916.6 1100.7" stroke="#8f0c00" stroke-opacity="0.30" stroke-width="0.80"/>
<path d="M1271.3 332.6L2771.3 1125.8M1275.2 331.5L2775.2 1125.1M1279 330.4L2779 1124.5M1282.9 329.3L2782.9 1123.9M1286.6 328.3L2786.6 1123.2M1290.4 327.2L2790.4 1122.6M1294.1 326.2L2794.1 1122M1297.7 325.2L2797.7 1121.3M1301.3 324.2L2801.3 1120.7M1304.9 323.2L2804.9 1120.1M1308.4 322.2L2808.4 1119.5M1311.9 321.2L2811.9 1118.9M1315.4 320.3L2815.4 1118.3M1318.8 319.3L2818.8 1117.7M1322.2 318.4L2822.2 1117.1M1325.5 317.4L2825.5 1116.5M1328.8 316.5L2828.8 1115.9M1332.1 315.6L2832.1 1115.4M1335.4 314.7L2835.4 1114.8M1338.6 313.8L2838.6 1114.3M1341.7 312.9L2841.7 1113.7M1344.9 312L2844.9 1113.2M1348 311.2L2848 1112.6M1351.1 310.3L2851.1 1112.1M1354.1 309.5L2854.1 1111.6M1357.1 308.6L2857.1 1111M1360.1 307.8L2860.1 1110.5M1363.1 307L2863.1 1110M1366 306.2L2866 1109.5M1368.9 305.3L2868.9 1109M1371.8 304.5L2871.8 1108.5M1374.6 303.8L2874.6 1108M1377.4 303L2877.4 1107.5" stroke="#8f0c00" stroke-opacity="0.30" stroke-width="1.20"/>
<path d="M1182.3 357.3L2682.3 1140.3M1187.3 355.9L2687.3 1139.5M1192.3 354.6L2692.3 1138.7M1197.1 353.2L2697.1 1137.9M1201.9 351.9L2701.9 1137.1M1206.7 350.6L2706.7 1136.3M1211.4 349.2L2711.4 1135.6M1216 348L2716 1134.8M1220.6 346.7L2720.6 1134.1M1225.1 345.4L2725.1 1133.3M1229.5 344.2L2729.5 1132.6M1233.9 343L2733.9 1131.9M1238.3 341.8L2738.3 1131.2M1242.6 340.6L2742.6 1130.5M1246.8 339.4L2746.8 1129.8M1251 338.2L2751 1129.1M1255.2 337.1L2755.2 1128.4M1259.3 335.9L2759.3 1127.7M1263.3 334.8L2763.3 1127.1M1267.3 333.7L2767.3 1126.4" stroke="#8f0c00" stroke-opacity="0.30" stroke-width="1.60"/>
<path d="M1098.7 380.6L2598.7 1154M1104.9 378.9L2604.9 1153M1110.9 377.2L2610.9 1152M1116.9 375.5L2616.9 1151M1122.8 373.9L2622.8 1150.1M1128.6 372.3L2628.6 1149.1M1134.3 370.7L2634.3 1148.2M1139.9 369.1L2639.9 1147.3M1145.5 367.6L2645.5 1146.3M1150.9 366.1L2650.9 1145.4M1156.4 364.6L2656.4 1144.6M1161.7 363.1L2661.7 1143.7M1167 361.6L2667 1142.8M1172.2 360.2L2672.2 1142M1177.3 358.7L2677.3 1141.1" stroke="#8f0c00" stroke-opacity="0.30" stroke-width="2.00"/>
<path d="M1017.4 403.2L2517.4 1157.6M1024.8 401.1L2524.8 1157.4M1032.1 399.1L2532.1 1157.1M1039.2 397.1L2539.2 1156.9M1046.2 395.2L2546.2 1156.7M1053.1 393.3L2553.1 1156.5M1059.9 391.4L2559.9 1156.2M1066.6 389.5L2566.6 1156M1073.3 387.7L2573.3 1155.8M1079.8 385.9L2579.8 1155.6M1086.2 384.1L2586.2 1155.4M1092.5 382.3L2592.5 1155" stroke="#8f0c00" stroke-opacity="0.30" stroke-width="2.40"/>
<path d="M945.5 423.2L2445.5 1159.9M954 420.8L2454 1159.6M962.4 418.5L2462.4 1159.4M970.7 416.2L2470.7 1159.1M978.8 413.9L2478.8 1158.8M986.8 411.7L2486.8 1158.6M994.6 409.5L2494.6 1158.3M1002.4 407.4L2502.4 1158.1M1010 405.3L2510 1157.8" stroke="#8f0c00" stroke-opacity="0.30" stroke-width="2.80"/>
<path d="M871.5 443.7L2371.5 1162.3M881.4 441L2381.4 1162M891 438.3L2391 1161.6M900.5 435.7L2400.5 1161.3M909.8 433.1L2409.8 1161M919 430.6L2419 1160.8M928 428.1L2428 1160.5M936.8 425.6L2436.8 1160.2" stroke="#8f0c00" stroke-opacity="0.30" stroke-width="3.20"/>
<path d="M797.3 464.4L2297.3 1161.7M808.5 461.2L2308.5 1162M819.5 458.2L2319.5 1162.3M830.3 455.2L2330.3 1162.6M840.9 452.2L2340.9 1162.9M851.3 449.3L2351.3 1162.9M861.5 446.5L2361.5 1162.6" stroke="#8f0c00" stroke-opacity="0.30" stroke-width="3.60"/>
<path d="M737.6 480.9L2237.6 1160M750 477.5L2250 1160.4M762.2 474.1L2262.2 1160.7M774.1 470.8L2274.1 1161M785.8 467.5L2285.8 1161.4" stroke="#8f0c00" stroke-opacity="0.30" stroke-width="4.00"/>
<path d="M671.4 499.3L2171.4 1158M685.2 495.5L2185.2 1158.6M698.7 491.7L2198.7 1159M712 488.1L2212 1159.3M724.9 484.5L2224.9 1159.7" stroke="#8f0c00" stroke-opacity="0.30" stroke-width="4.40"/>
<path d="M613 515.5L2113 1153.2M628.1 511.3L2128.1 1154.5M642.8 507.2L2142.8 1155.7M657.3 503.2L2157.3 1156.9" stroke="#8f0c00" stroke-opacity="0.30" stroke-width="4.80"/>
<path d="M548.9 533.3L2048.9 1148M565.5 528.7L2065.5 1149.3M581.7 524.2L2081.7 1150.7M597.5 519.8L2097.5 1152" stroke="#8f0c00" stroke-opacity="0.30" stroke-width="5.20"/>
<path d="M478.4 552.9L1978.4 1142.2M496.7 547.8L1996.7 1143.7M514.5 542.9L2014.5 1145.2M531.9 538L2031.9 1146.6" stroke="#8f0c00" stroke-opacity="0.30" stroke-width="5.60"/>
<path d="M420.7 568.9L1920.7 1137.5M440.4 563.5L1940.4 1139.1M459.7 558.1L1959.7 1140.7" stroke="#8f0c00" stroke-opacity="0.30" stroke-width="6.00"/>
<path d="M358.2 586.3L1858.2 1132.4M379.6 580.3L1879.6 1134.1M400.4 574.6L1900.4 1135.8" stroke="#8f0c00" stroke-opacity="0.30" stroke-width="6.40"/>
<path d="M290.3 605.1L1790.3 1126.8M313.6 598.7L1813.6 1128.7M336.2 592.4L1836.2 1130.6" stroke="#8f0c00" stroke-opacity="0.30" stroke-width="6.80"/>
<path d="M216.4 625.7L1716.4 1122.4M241.8 618.6L1741.8 1122.8M266.4 611.8L1766.4 1124.9" stroke="#8f0c00" stroke-opacity="0.30" stroke-width="7.20"/>
<path d="M163.4 640.4L1663.4 1122.2M190.3 632.9L1690.3 1122.3" stroke="#8f0c00" stroke-opacity="0.30" stroke-width="7.60"/>
<path d="M106.9 656L1606.9 1122M135.6 648.1L1635.6 1122.1" stroke="#8f0c00" stroke-opacity="0.30" stroke-width="8.00"/>
<path d="M46.8 672.7L1546.8 1122M77.3 664.3L1577.3 1121.9" stroke="#8f0c00" stroke-opacity="0.30" stroke-width="8.40"/>
<path d="M-17.5 690.6L1482.5 1124.4M15.2 681.5L1515.2 1123.1" stroke="#8f0c00" stroke-opacity="0.30" stroke-width="8.80"/>
<path d="M-51.2 699.9L1448.8 1125.6" stroke="#8f0c00" stroke-opacity="0.30" stroke-width="9.20"/>
<path d="M-122.4 719.7L1377.6 1128.3M-86.2 709.6L1413.8 1126.9" stroke="#8f0c00" stroke-opacity="0.30" stroke-width="9.60"/>
<path d="M-160 730.1L1340 1129.7" stroke="#8f0c00" stroke-opacity="0.30" stroke-width="10.00"/>
<path d="M1380.2 301.4L2880.2 1106.2M1383 300.6L2883 1105.7M1385.7 299.8L2885.7 1105.3M1388.4 299.1L2888.4 1104.8M1391.1 298.4L2891.1 1104.4M1393.8 297.6L2893.8 1103.9M1396.4 296.9L2896.4 1103.5M1399 296.2L2899 1103M1401.6 295.5L2901.6 1102.6M1404.1 294.8L2904.1 1102.1M1406.7 294.1L2906.7 1101.7M1409.2 293.4L2909.2 1101.3M1411.7 292.7L2911.7 1100.8M1414.1 292L2914.1 1100.4M1416.6 291.3L2916.6 1100" stroke="#f02806" stroke-opacity="0.45" stroke-width="0.40"/>
<path d="M1211.4 347.9L2711.4 1134.2M1216 346.6L2716 1133.4M1220.6 345.3L2720.6 1132.7M1225.1 344.1L2725.1 1132M1229.5 342.9L2729.5 1131.3M1233.9 341.7L2733.9 1130.6M1238.3 340.5L2738.3 1129.9M1242.6 339.3L2742.6 1129.2M1246.8 338.1L2746.8 1128.5M1251 337L2751 1127.8M1255.2 335.8L2755.2 1127.2M1259.3 334.7L2759.3 1126.5M1263.3 333.6L2763.3 1125.9M1267.3 332.5L2767.3 1125.2M1271.3 331.4L2771.3 1124.6M1275.2 330.3L2775.2 1124M1279 329.3L2779 1123.3M1282.9 328.2L2782.9 1122.7M1286.6 327.2L2786.6 1122.1M1290.4 326.1L2790.4 1121.5M1294.1 325.1L2794.1 1120.9M1297.7 324.1L2797.7 1120.2M1301.3 323.1L2801.3 1119.6M1304.9 322.1L2804.9 1119M1308.4 321.2L2808.4 1118.4M1311.9 320.2L2811.9 1117.8M1315.4 319.2L2815.4 1117.2M1318.8 318.3L2818.8 1116.7M1322.2 317.4L2822.2 1116.1M1325.5 316.4L2825.5 1115.5M1328.8 315.5L2828.8 1115M1332.1 314.6L2832.1 1114.4M1335.4 313.7L2835.4 1113.8M1338.6 312.9L2838.6 1113.3M1341.7 312L2841.7 1112.8M1344.9 311.1L2844.9 1112.2M1348 310.3L2848 1111.7M1351.1 309.4L2851.1 1111.2M1354.1 308.6L2854.1 1110.7M1357.1 307.7L2857.1 1110.1M1360.1 306.9L2860.1 1109.6M1363.1 306.1L2863.1 1109.1M1366 305.3L2866 1108.6M1368.9 304.5L2868.9 1108.1M1371.8 303.7L2871.8 1107.6M1374.6 302.9L2874.6 1107.2M1377.4 302.1L2877.4 1106.7" stroke="#f02806" stroke-opacity="0.45" stroke-width="0.80"/>
<path d="M1066.6 387.6L2566.6 1154.1M1073.3 385.8L2573.3 1153.9M1079.8 384L2579.8 1153.7M1086.2 382.2L2586.2 1153.5M1092.5 380.5L2592.5 1153.2M1098.7 378.8L2598.7 1152.2M1104.9 377.1L2604.9 1151.2M1110.9 375.4L2610.9 1150.2M1116.9 373.8L2616.9 1149.3M1122.8 372.2L2622.8 1148.3M1128.6 370.6L2628.6 1147.4M1134.3 369L2634.3 1146.5M1139.9 367.5L2639.9 1145.6M1145.5 366L2645.5 1144.7M1150.9 364.5L2650.9 1143.8M1156.4 363L2656.4 1143M1161.7 361.5L2661.7 1142.1M1167 360.1L2667 1141.3M1172.2 358.6L2672.2 1140.5M1177.3 357.2L2677.3 1139.6M1182.3 355.8L2682.3 1138.8M1187.3 354.5L2687.3 1138M1192.3 353.1L2692.3 1137.2M1197.1 351.8L2697.1 1136.5M1201.9 350.5L2701.9 1135.7M1206.7 349.2L2706.7 1134.9" stroke="#f02806" stroke-opacity="0.45" stroke-width="1.20"/>
<path d="M945.5 420.7L2445.5 1157.5M954 418.4L2454 1157.2M962.4 416.1L2462.4 1157M970.7 413.9L2470.7 1156.8M978.8 411.6L2478.8 1156.5M986.8 409.5L2486.8 1156.3M994.6 407.3L2494.6 1156.1M1002.4 405.2L2502.4 1155.9M1010 403.1L2510 1155.7M1017.4 401.1L2517.4 1155.5M1024.8 399L2524.8 1155.3M1032.1 397.1L2532.1 1155.1M1039.2 395.1L2539.2 1154.9M1046.2 393.2L2546.2 1154.7M1053.1 391.3L2553.1 1154.5M1059.9 389.4L2559.9 1154.3" stroke="#f02806" stroke-opacity="0.45" stroke-width="1.60"/>
<path d="M830.3 452.2L2330.3 1159.6M840.9 449.3L2340.9 1160M851.3 446.5L2351.3 1160.1M861.5 443.7L2361.5 1159.8M871.5 441L2371.5 1159.5M881.4 438.3L2381.4 1159.2M891 435.6L2391 1159M900.5 433L2400.5 1158.7M909.8 430.5L2409.8 1158.5M919 428L2419 1158.2M928 425.5L2428 1158M936.8 423.1L2436.8 1157.7" stroke="#f02806" stroke-opacity="0.45" stroke-width="2.00"/>
<path d="M712 484.6L2212 1155.8M724.9 481L2224.9 1156.3M737.6 477.6L2237.6 1156.7M750 474.2L2250 1157.1M762.2 470.8L2262.2 1157.5M774.1 467.6L2274.1 1157.8M785.8 464.4L2285.8 1158.2M797.3 461.3L2297.3 1158.6M808.5 458.2L2308.5 1158.9M819.5 455.2L2319.5 1159.3" stroke="#f02806" stroke-opacity="0.45" stroke-width="2.40"/>
<path d="M613 511.6L2113 1149.3M628.1 507.5L2128.1 1150.6M642.8 503.4L2142.8 1151.9M657.3 499.5L2157.3 1153.1M671.4 495.6L2171.4 1154.3M685.2 491.9L2185.2 1155M698.7 488.2L2198.7 1155.4" stroke="#f02806" stroke-opacity="0.45" stroke-width="2.80"/>
<path d="M496.7 543.3L1996.7 1139.2M514.5 538.5L2014.5 1140.8M531.9 533.7L2031.9 1142.3M548.9 529.1L2048.9 1143.8M565.5 524.6L2065.5 1145.2M581.7 520.1L2081.7 1146.6M597.5 515.8L2097.5 1148" stroke="#f02806" stroke-opacity="0.45" stroke-width="3.20"/>
<path d="M400.4 569.7L1900.4 1130.9M420.7 564.1L1920.7 1132.7M440.4 558.7L1940.4 1134.4M459.7 553.5L1959.7 1136M478.4 548.3L1978.4 1137.7" stroke="#f02806" stroke-opacity="0.45" stroke-width="3.60"/>
<path d="M290.3 599.7L1790.3 1121.4M313.6 593.4L1813.6 1123.4M336.2 587.2L1836.2 1125.4M358.2 581.2L1858.2 1127.3M379.6 575.3L1879.6 1129.1" stroke="#f02806" stroke-opacity="0.45" stroke-width="4.00"/>
<path d="M190.3 627L1690.3 1116.4M216.4 619.9L1716.4 1116.6M241.8 613L1741.8 1117.2M266.4 606.3L1766.4 1119.3" stroke="#f02806" stroke-opacity="0.45" stroke-width="4.40"/>
<path d="M77.3 657.8L1577.3 1115.5M106.9 649.8L1606.9 1115.8M135.6 642L1635.6 1116M163.4 634.4L1663.4 1116.2" stroke="#f02806" stroke-opacity="0.45" stroke-width="4.80"/>
<path d="M-17.5 683.7L1482.5 1117.5M15.2 674.8L1515.2 1116.4M46.8 666.2L1546.8 1115.4" stroke="#f02806" stroke-opacity="0.45" stroke-width="5.20"/>
<path d="M-86.2 702.4L1413.8 1119.7M-51.2 692.9L1448.8 1118.6" stroke="#f02806" stroke-opacity="0.45" stroke-width="5.60"/>
<path d="M-160 722.5L1340 1122.1M-122.4 712.3L1377.6 1120.9" stroke="#f02806" stroke-opacity="0.45" stroke-width="6.00"/>
<path d="M1311.9 322L2811.9 1119.6M1315.4 321L2815.4 1119M1318.8 320.1L2818.8 1118.4M1322.2 319.1L2822.2 1117.8M1325.5 318.2L2825.5 1117.2M1328.8 317.2L2828.8 1116.7M1332.1 316.3L2832.1 1116.1M1335.4 315.4L2835.4 1115.5M1338.6 314.5L2838.6 1115M1341.7 313.6L2841.7 1114.4M1344.9 312.7L2844.9 1113.8M1348 311.9L2848 1113.3M1351.1 311L2851.1 1112.8M1354.1 310.1L2854.1 1112.2M1357.1 309.3L2857.1 1111.7M1360.1 308.5L2860.1 1111.2M1363.1 307.6L2863.1 1110.7M1366 306.8L2866 1110.1M1368.9 306L2868.9 1109.6M1371.8 305.2L2871.8 1109.1M1374.6 304.4L2874.6 1108.6M1377.4 303.6L2877.4 1108.1M1380.2 302.8L2880.2 1107.7M1383 302L2883 1107.2M1385.7 301.3L2885.7 1106.7M1388.4 300.5L2888.4 1106.2M1391.1 299.7L2891.1 1105.7M1393.8 299L2893.8 1105.3M1396.4 298.3L2896.4 1104.8M1399 297.5L2899 1104.4M1401.6 296.8L2901.6 1103.9M1404.1 296.1L2904.1 1103.5M1406.7 295.4L2906.7 1103M1409.2 294.7L2909.2 1102.6M1411.7 294L2911.7 1102.1M1414.1 293.3L2914.1 1101.7M1416.6 292.6L2916.6 1101.3" stroke="#5c0900" stroke-opacity="0.45" stroke-width="0.45"/>
<path d="M1122.8 375.2L2622.8 1151.3M1128.6 373.5L2628.6 1150.3M1134.3 371.9L2634.3 1149.4M1139.9 370.3L2639.9 1148.5M1145.5 368.8L2645.5 1147.5M1150.9 367.2L2650.9 1146.6M1156.4 365.7L2656.4 1145.7M1161.7 364.2L2661.7 1144.8M1167 362.7L2667 1144M1172.2 361.3L2672.2 1143.1M1177.3 359.8L2677.3 1142.2M1182.3 358.4L2682.3 1141.4M1187.3 357L2687.3 1140.6M1192.3 355.6L2692.3 1139.7M1197.1 354.3L2697.1 1138.9M1201.9 352.9L2701.9 1138.1M1206.7 351.6L2706.7 1137.3M1211.4 350.3L2711.4 1136.6M1216 349L2716 1135.8M1220.6 347.7L2720.6 1135M1225.1 346.4L2725.1 1134.3M1229.5 345.1L2729.5 1133.6M1233.9 343.9L2733.9 1132.8M1238.3 342.7L2738.3 1132.1M1242.6 341.5L2742.6 1131.4M1246.8 340.3L2746.8 1130.7M1251 339.1L2751 1130M1255.2 337.9L2755.2 1129.3M1259.3 336.8L2759.3 1128.6M1263.3 335.7L2763.3 1127.9M1267.3 334.5L2767.3 1127.3M1271.3 333.4L2771.3 1126.6M1275.2 332.3L2775.2 1126M1279 331.2L2779 1125.3M1282.9 330.2L2782.9 1124.7M1286.6 329.1L2786.6 1124.1M1290.4 328.1L2790.4 1123.4M1294.1 327L2794.1 1122.8M1297.7 326L2797.7 1122.1M1301.3 325L2801.3 1121.5M1304.9 324L2804.9 1120.9M1308.4 323L2808.4 1120.2" stroke="#5c0900" stroke-opacity="0.50" stroke-width="0.60"/>
<path d="M954 422.6L2454 1161.4M962.4 420.2L2462.4 1161.1M970.7 417.9L2470.7 1160.8M978.8 415.6L2478.8 1160.5M986.8 413.4L2486.8 1160.2M994.6 411.2L2494.6 1160M1002.4 409L2502.4 1159.7M1010 406.9L2510 1159.4M1017.4 404.8L2517.4 1159.2M1024.8 402.7L2524.8 1158.9M1032.1 400.6L2532.1 1158.7M1039.2 398.6L2539.2 1158.4M1046.2 396.7L2546.2 1158.2M1053.1 394.7L2553.1 1157.9M1059.9 392.8L2559.9 1157.7M1066.6 390.9L2566.6 1157.4M1073.3 389.1L2573.3 1157.2M1079.8 387.2L2579.8 1157M1086.2 385.4L2586.2 1156.7M1092.5 383.7L2592.5 1156.3M1098.7 381.9L2598.7 1155.3M1104.9 380.2L2604.9 1154.3M1110.9 378.5L2610.9 1153.3M1116.9 376.8L2616.9 1152.3" stroke="#5c0900" stroke-opacity="0.60" stroke-width="0.75"/>
<path d="M808.5 463.5L2308.5 1164.2M819.5 460.4L2319.5 1164.5M830.3 457.3L2330.3 1164.7M840.9 454.4L2340.9 1165M851.3 451.4L2351.3 1165M861.5 448.6L2361.5 1164.6M871.5 445.8L2371.5 1164.3M881.4 443L2381.4 1163.9M891 440.3L2391 1163.6M900.5 437.6L2400.5 1163.3M909.8 435L2409.8 1162.9M919 432.4L2419 1162.6M928 429.9L2428 1162.3M936.8 427.4L2436.8 1162M945.5 425L2445.5 1161.7" stroke="#5c0900" stroke-opacity="0.71" stroke-width="0.90"/>
<path d="M671.4 502L2171.4 1160.7M685.2 498.1L2185.2 1161.2M698.7 494.3L2198.7 1161.6M712 490.6L2212 1161.9M724.9 487L2224.9 1162.2M737.6 483.4L2237.6 1162.5M750 479.9L2250 1162.8M762.2 476.5L2262.2 1163.1M774.1 473.1L2274.1 1163.4M785.8 469.8L2285.8 1163.7M797.3 466.6L2297.3 1163.9" stroke="#5c0900" stroke-opacity="0.82" stroke-width="1.05"/>
<path d="M531.9 541.2L2031.9 1149.7M548.9 536.4L2048.9 1151.1M565.5 531.8L2065.5 1152.4M581.7 527.2L2081.7 1153.7M597.5 522.8L2097.5 1154.9M613 518.4L2113 1156.1M628.1 514.2L2128.1 1157.3M642.8 510L2142.8 1158.5M657.3 506L2157.3 1159.6" stroke="#5c0900" stroke-opacity="0.85" stroke-width="1.20"/>
<path d="M400.4 578.2L1900.4 1139.4M420.7 572.5L1920.7 1141M440.4 566.9L1940.4 1142.6M459.7 561.5L1959.7 1144.1M478.4 556.2L1978.4 1145.5M496.7 551.1L1996.7 1147M514.5 546.1L2014.5 1148.4" stroke="#5c0900" stroke-opacity="0.85" stroke-width="1.35"/>
<path d="M266.4 615.8L1766.4 1128.9M290.3 609.1L1790.3 1130.8M313.6 602.5L1813.6 1132.6M336.2 596.2L1836.2 1134.4M358.2 590L1858.2 1136.1M379.6 584L1879.6 1137.8" stroke="#5c0900" stroke-opacity="0.85" stroke-width="1.50"/>
<path d="M135.6 652.6L1635.6 1126.6M163.4 644.8L1663.4 1126.6M190.3 637.2L1690.3 1126.6M216.4 629.9L1716.4 1126.6M241.8 622.7L1741.8 1127" stroke="#5c0900" stroke-opacity="0.85" stroke-width="1.65"/>
<path d="M15.2 686.4L1515.2 1128.1M46.8 677.5L1546.8 1126.8M77.3 668.9L1577.3 1126.6M106.9 660.6L1606.9 1126.6" stroke="#5c0900" stroke-opacity="0.85" stroke-width="1.80"/>
<path d="M-86.2 714.9L1413.8 1132.2M-51.2 705.1L1448.8 1130.8M-17.5 695.6L1482.5 1129.4" stroke="#5c0900" stroke-opacity="0.85" stroke-width="1.95"/>
<path d="M-160 735.6L1340 1135.2M-122.4 725.1L1377.6 1133.7" stroke="#5c0900" stroke-opacity="0.85" stroke-width="2.10"/>
<path d="M-169.8 737.9L-150.2 732.4L-151.3 737.9ZM-131.9 727.2L-113 721.9L-114.1 727.4ZM-95.3 717L-77.1 711.8L-78.1 717.2ZM-60 707L-42.5 702.1L-43.4 707.3ZM-26 697.5L-9 692.7L-9.9 697.8ZM7 688.2L23.4 683.6L22.5 688.6ZM38.8 679.3L54.7 674.8L53.8 679.6ZM69.6 670.6L85 666.3L84.2 671ZM99.5 662.2L114.4 658L113.5 662.7ZM128.4 654.1L142.8 650L142 654.6ZM156.4 646.2L170.4 642.3L169.6 646.8ZM183.5 638.6L197.1 634.8L196.3 639.2ZM209.8 631.2L223 627.5L222.3 631.8ZM235.4 624L248.2 620.4L247.5 624.6ZM260.2 617.1L272.6 613.6L272 617.7ZM284.3 610.3L296.4 606.9L295.7 610.9ZM307.7 603.7L319.5 600.4L318.8 604.4ZM330.5 597.3L341.9 594.1L341.3 598ZM352.6 591.1L363.8 588L363.1 591.8ZM374.2 585L385 582L384.4 585.8ZM395.1 579.1L405.7 576.2L405.1 579.9ZM415.5 573.4L425.8 570.5L425.2 574.2ZM435.4 567.8L445.4 565L444.9 568.6ZM454.8 562.4L464.5 559.6L464 563.2ZM473.7 557.1L483.2 554.4L482.6 557.9ZM492.1 551.9L501.3 549.3L500.8 552.7ZM510 546.8L519.1 544.3L518.6 547.7ZM527.5 541.9L536.4 539.4L535.9 542.8ZM544.6 537.1L553.2 534.7L552.8 538ZM561.3 532.4L569.7 530.1L569.3 533.3ZM577.6 527.9L585.8 525.5L585.4 528.7ZM593.5 523.4L601.5 521.1L601.1 524.3ZM609 519L616.9 516.8L616.5 519.9ZM624.2 514.8L631.9 512.6L631.5 515.6ZM639.1 510.6L646.6 508.5L646.2 511.5ZM653.6 506.5L660.9 504.4L660.5 507.4ZM667.8 502.5L675 500.5L674.6 503.4ZM681.7 498.6L688.7 496.6L688.3 499.5ZM695.3 494.8L702.2 492.9L701.8 495.7ZM708.6 491L715.3 489.2L715 491.9ZM721.6 487.4L728.2 485.5L727.8 488.3ZM734.4 483.8L740.8 482L740.5 484.7ZM746.9 480.3L753.2 478.5L752.8 481.2ZM759.1 476.9L765.3 475.1L764.9 477.7ZM771.1 473.5L777.2 471.8L776.8 474.4ZM782.8 470.2L788.8 468.5L788.5 471.1ZM794.3 466.9L800.2 465.3L799.9 467.8ZM805.6 463.8L811.4 462.2L811 464.7ZM816.7 460.7L822.3 459.1L822 461.5ZM827.6 457.6L833.1 456.1L832.8 458.5ZM838.2 454.6L843.6 453.1L843.3 455.5ZM848.7 451.7L854 450.2L853.7 452.6ZM858.9 448.8L864.1 447.3L863.8 449.7ZM869 446L874.1 444.5L873.8 446.8ZM878.9 443.2L883.9 441.8L883.6 444.1ZM888.6 440.5L893.5 439.1L893.2 441.3ZM898.1 437.8L903 436.4L902.7 438.6ZM907.5 435.2L912.2 433.8L912 436ZM916.7 432.6L921.3 431.3L921.1 433.4ZM925.7 430L930.3 428.7L930 430.9ZM934.6 427.5L939.1 426.3L938.8 428.4ZM943.3 425.1L947.7 423.8L947.5 425.9ZM951.9 422.7L956.2 421.5L956 423.5ZM960.3 420.3L964.6 419.1L964.3 421.2ZM968.6 418L972.8 416.8L972.6 418.8ZM976.7 415.7L980.9 414.5L980.7 416.5ZM984.7 413.4L988.8 412.3L988.6 414.3ZM992.6 411.2L996.6 410.1L996.4 412ZM1000.4 409L1004.3 407.9L1004.1 409.9ZM1008 406.9L1011.9 405.8L1011.7 407.7ZM1015.5 404.8L1019.4 403.7L1019.1 405.6ZM1022.9 402.7L1026.7 401.7L1026.5 403.5ZM1030.2 400.7L1033.9 399.6L1033.7 401.5ZM1037.4 398.7L1041 397.6L1040.8 399.5ZM1044.4 396.7L1048 395.7L1047.8 397.5ZM1051.4 394.7L1054.9 393.7L1054.7 395.5ZM1058.2 392.8L1061.7 391.8L1061.5 393.6ZM1064.9 390.9L1068.4 389.9L1068.2 391.7ZM1071.6 389L1074.9 388.1L1074.8 389.8ZM1078.1 387.2L1081.4 386.3L1081.2 388ZM1084.5 385.4L1087.8 384.5L1087.6 386.2ZM1090.9 383.6L1094.1 382.7L1093.9 384.4ZM1097.1 381.9L1100.3 381L1100.1 382.6ZM1103.3 380.1L1106.4 379.2L1106.3 380.9ZM1109.4 378.4L1112.5 377.5L1112.3 379.2ZM1115.3 376.7L1118.4 375.9L1118.2 377.5ZM1121.2 375.1L1124.3 374.2L1124.1 375.9ZM1127.1 373.4L1130 372.6L1129.9 374.2ZM1132.8 371.8L1135.7 371L1135.6 372.6ZM1138.5 370.2L1141.4 369.4L1141.2 371ZM1144 368.7L1146.9 367.9L1146.7 369.4ZM1149.5 367.1L1152.4 366.3L1152.2 367.9ZM1155 365.6L1157.7 364.8L1157.6 366.4ZM1160.3 364.1L1163.1 363.3L1162.9 364.8ZM1165.6 362.6L1168.3 361.9L1168.2 363.4ZM1170.8 361.1L1173.5 360.4L1173.3 361.9ZM1176 359.7L1178.6 359L1178.5 360.4ZM1181 358.3L1183.6 357.5L1183.5 359ZM1186.1 356.9L1188.6 356.1L1188.5 357.6ZM1191 355.5L1193.5 354.8L1193.4 356.2ZM1195.9 354.1L1198.4 353.4L1198.3 354.8ZM1200.7 352.7L1203.2 352.1L1203 353.5ZM1205.5 351.4L1207.9 350.7L1207.8 352.1ZM1210.2 350.1L1212.6 349.4L1212.4 350.8ZM1214.8 348.8L1217.2 348.1L1217.1 349.5ZM1219.4 347.5L1221.7 346.8L1221.6 348.2ZM1223.9 346.2L1226.2 345.6L1226.1 346.9ZM1228.4 345L1230.7 344.3L1230.6 345.7ZM1232.8 343.7L1235.1 343.1L1234.9 344.4ZM1237.2 342.5L1239.4 341.9L1239.3 343.2ZM1241.5 341.3L1243.7 340.7L1243.6 342ZM1245.7 340.1L1247.9 339.5L1247.8 340.8ZM1249.9 338.9L1252.1 338.3L1252 339.6ZM1254.1 337.7L1256.2 337.1L1256.1 338.4ZM1258.2 336.6L1260.3 336L1260.2 337.3ZM1262.3 335.4L1264.4 334.9L1264.2 336.1ZM1266.3 334.3L1268.3 333.7L1268.2 335ZM1270.2 333.2L1272.3 332.6L1272.2 333.9ZM1274.2 332.1L1276.2 331.5L1276.1 332.8ZM1278 331L1280 330.5L1279.9 331.7ZM1281.9 329.9L1283.8 329.4L1283.7 330.6ZM1285.7 328.9L1287.6 328.3L1287.5 329.6ZM1289.4 327.8L1291.3 327.3L1291.2 328.5ZM1293.1 326.8L1295 326.2L1294.9 327.5ZM1296.8 325.8L1298.7 325.2L1298.5 326.4ZM1300.4 324.7L1302.3 324.2L1302.2 325.4ZM1304 323.7L1305.8 323.2L1305.7 324.4ZM1307.5 322.7L1309.3 322.2L1309.2 323.4ZM1311 321.7L1312.8 321.2L1312.7 322.4ZM1314.5 320.8L1316.3 320.3L1316.2 321.4ZM1317.9 319.8L1319.7 319.3L1319.6 320.5ZM1321.3 318.9L1323.1 318.4L1323 319.5ZM1324.7 317.9L1326.4 317.4L1326.3 318.6ZM1328 317L1329.7 316.5L1329.6 317.6ZM1331.3 316.1L1333 315.6L1332.9 316.7ZM1334.5 315.1L1336.2 314.7L1336.1 315.8ZM1337.7 314.2L1339.4 313.8L1339.3 314.9ZM1340.9 313.3L1342.6 312.9L1342.5 314ZM1344.1 312.5L1345.7 312L1345.6 313.1ZM1347.2 311.6L1348.8 311.1L1348.7 312.2ZM1350.3 310.7L1351.9 310.3L1351.8 311.4ZM1353.3 309.9L1354.9 309.4L1354.8 310.5ZM1356.4 309L1357.9 308.6L1357.8 309.7ZM1359.4 308.2L1360.9 307.7L1360.8 308.8ZM1362.3 307.3L1363.8 306.9L1363.8 308ZM1365.3 306.5L1366.8 306.1L1366.7 307.2ZM1368.2 305.7L1369.7 305.3L1369.6 306.3ZM1371 304.9L1372.5 304.5L1372.4 305.5ZM1373.9 304.1L1375.3 303.7L1375.3 304.7ZM1376.7 303.3L1378.2 302.9L1378.1 303.9ZM1379.5 302.5L1380.9 302.1L1380.9 303.1ZM1382.3 301.7L1383.7 301.3L1383.6 302.4ZM1385 301L1386.4 300.6L1386.3 301.6ZM1387.7 300.2L1389.1 299.8L1389 300.8ZM1390.4 299.4L1391.8 299.1L1391.7 300.1ZM1393.1 298.7L1394.4 298.3L1394.4 299.3ZM1395.7 298L1397.1 297.6L1397 298.6ZM1398.3 297.2L1399.7 296.8L1399.6 297.8ZM1400.9 296.5L1402.2 296.1L1402.2 297.1ZM1403.5 295.8L1404.8 295.4L1404.7 296.4ZM1406 295.1L1407.3 294.7L1407.2 295.7ZM1408.5 294.3L1409.8 294L1409.7 295ZM1411 293.6L1412.3 293.3L1412.2 294.3ZM1413.5 293L1414.8 292.6L1414.7 293.6ZM1415.9 292.3L1417.2 291.9L1417.1 292.9Z" fill="#3f9600"/>
</g>
<polygon points="602,822.5 1287,513 1287,518 602,833.5" fill="#a50f00" opacity="0.55"/>
<path d="M602.0 833.5 L1287.0 518" stroke="#4a0800" stroke-width="1.3"/>
<polygon points="602,834.1 1287,518.6 1287,526 602,848.2" fill="#4fb900" />
<path d="M602.0 847 L1287.0 525.2" stroke="#3f9a00" stroke-width="2.2"/>
<polygon points="602,848.2 1287,526 1287,556.8 602,896.8" fill="#c41300" />
<g clip-path="url(#cyb)">
<polygon points="520,901.7 530.4,892 536.8,893.7 547,884.1 553.2,885.8 563.3,876.4 569.4,878.1 579.3,868.7 585.3,870.6 595,861.3 600.9,863.1 610.4,853.9 616.2,855.9 625.5,846.7 631.3,848.7 640.4,839.6 646,841.6 655,832.7 660.6,834.7 669.4,825.8 674.9,827.9 683.6,819.1 688.9,821.2 697.5,812.5 702.7,814.7 711.1,806 716.3,808.2 724.6,799.6 729.6,801.9 737.8,793.3 742.8,795.6 750.8,787.1 755.7,789.5 763.6,781 768.4,783.4 776.1,775 780.9,777.4 788.5,769.1 793.2,771.6 800.7,763.3 805.3,765.8 812.7,757.6 817.2,760.1 824.5,752 829,754.6 836.1,746.4 840.5,749.1 847.6,741 851.9,743.6 858.9,735.6 863.1,738.3 870,730.3 874.2,733 880.9,725.1 885,727.9 891.7,720 895.8,722.8 902.3,714.9 906.3,717.7 912.8,710 916.7,712.8 923.1,705.1 927,707.9 933.2,700.2 937.1,703.1 943.3,695.4 947,698.3 953.1,690.7 956.9,693.7 962.9,686.1 966.6,689.1 972.5,681.5 976.1,684.5 981.9,677 985.5,680 991.3,672.6 994.8,675.6 1000.5,668.2 1004,671.3 1009.6,663.9 1013,666.9 1018.5,659.6 1021.9,662.7 1027.4,655.4 1030.7,658.5 1036.1,651.3 1039.4,654.4 1044.7,647.2 1047.9,650.3 1053.2,643.1 1056.4,646.3 1061.6,639.1 1064.7,642.3 1069.8,635.2 1072.9,638.4 1078,631.3 1081.1,634.5 1086,627.5 1089.1,630.7 1094,623.7 1097,627 1101.9,619.9 1104.8,623.2 1109.6,616.3 1112.5,619.6 1117.3,612.6 1120.2,615.9 1124.8,609 1127.7,612.3 1132.3,605.4 1135.1,608.8 1139.7,601.9 1142.5,605.3 1147,598.5 1149.7,601.8 1154.2,595 1156.9,598.4 1161.3,591.6 1164,595.1 1168.3,588.3 1171,591.7 1175.3,585 1177.9,588.4 1182.1,581.7 1184.7,585.2 1188.9,578.5 1191.5,582 1195.6,575.3 1198.1,578.8 1202.2,572.2 1204.7,575.7 1208.8,569 1211.3,572.6 1215.3,566 1217.7,569.5 1221.7,562.9 1224.1,566.5 1228,559.9 1230.4,563.5 1234.2,556.9 1236.6,560.5 1240.4,554 1242.8,557.6 1246.5,551.1 1248.9,554.7 1252.6,548.2 1254.9,551.8 1258.6,545.3 1260.8,549 1264.5,542.5 1266.7,546.2 1270.3,539.7 1272.5,543.4 1276.1,537 1278.3,540.6 1281.8,534.3 1284,537.9 1287.5,531.6 1289.6,535.2 1293.1,528.9 1295.2,532.6 1298.6,526.3 1300.7,530 1304.1,523.6 1306.2,527.4 1309.6,521.1 1311.6,524.8 1314.9,518.5 1317,522.2 1320.2,516 1322.2,519.7 1325.5,513.5 1327.5,517.2 1330.7,511 1326.7,527.8 1323.9,533.6 1321.5,530.4 1318.6,536.2 1316.2,533 1313.3,538.8 1310.9,535.6 1307.9,541.4 1305.5,538.2 1302.5,544.1 1300,540.9 1297,546.8 1294.5,543.6 1291.5,549.5 1289,546.3 1285.9,552.2 1283.3,549.1 1280.2,555 1277.7,551.9 1274.5,557.8 1271.9,554.7 1268.7,560.7 1266.1,557.5 1262.9,563.5 1260.2,560.4 1257,566.4 1254.3,563.3 1251,569.3 1248.3,566.3 1245,572.3 1242.2,569.3 1238.9,575.3 1236.1,572.3 1232.7,578.3 1229.9,575.3 1226.4,581.4 1223.6,578.4 1220.1,584.5 1217.2,581.5 1213.7,587.6 1210.8,584.7 1207.2,590.8 1204.3,587.8 1200.7,594 1197.7,591.1 1194.1,597.2 1191.1,594.3 1187.4,600.5 1184.3,597.6 1180.6,603.8 1177.5,601 1173.8,607.2 1170.6,604.3 1166.8,610.6 1163.7,607.8 1159.8,614 1156.6,611.2 1152.7,617.5 1149.4,614.7 1145.5,621.1 1142.2,618.3 1138.2,624.6 1134.9,621.9 1130.9,628.2 1127.5,625.5 1123.4,631.9 1120,629.2 1115.8,635.6 1112.4,632.9 1108.2,639.3 1104.7,636.7 1100.4,643.1 1096.9,640.5 1092.6,647 1089,644.4 1084.7,650.9 1081,648.3 1076.6,654.8 1072.9,652.2 1068.5,658.8 1064.7,656.3 1060.2,662.9 1056.4,660.3 1051.8,667 1048,664.5 1043.3,671.1 1039.5,668.6 1034.8,675.3 1030.8,672.9 1026.1,679.6 1022.1,677.2 1017.2,683.9 1013.2,681.5 1008.3,688.3 1004.2,685.9 999.2,692.8 995.1,690.4 990,697.3 985.8,694.9 980.7,701.8 976.4,699.5 971.3,706.5 966.9,704.2 961.7,711.2 957.3,708.9 952,715.9 947.5,713.7 942.1,720.8 937.6,718.6 932.1,725.7 927.5,723.5 922,730.6 917.3,728.5 911.7,735.7 906.9,733.6 901.2,740.8 896.4,738.7 890.6,746 885.8,744 879.9,751.3 874.9,749.3 869,756.6 863.9,754.7 857.9,762 852.8,760.1 846.6,767.6 841.5,765.7 835.2,773.2 829.9,771.3 823.6,778.9 818.3,777.1 811.8,784.6 806.4,782.9 799.8,790.5 794.3,788.8 787.7,796.5 782.1,794.8 775.3,802.5 769.6,800.9 762.8,808.7 757,807.1 750,814.9 744.1,813.4 737,821.3 731.1,819.8 723.9,827.7 717.8,826.3 710.5,834.3 704.3,832.9 696.8,841 690.6,839.7 683,847.8 676.6,846.5 668.9,854.7 662.4,853.5 654.5,861.7 647.9,860.6 639.9,868.9 633.2,867.8 625.1,876.1 618.3,875.1 610,883.6 603,882.6 594.6,891.1 587.5,890.2 579,898.8 571.7,897.9 563,906.6 555.7,905.8 546.8,914.5 539.3,913.8 530.2,922.6 522.6,922 513.4,930.9" fill="#c9a300"/>
<path d="M534.4 892.8L529.5 919.8M550.9 884.9L546 911.7M567.2 877.2L562.3 903.7M583.1 869.6L578.3 895.9M598.7 862.2L593.9 888.2M614.1 854.9L609.3 880.7M629.1 847.7L624.4 873.3M644 840.6L639.3 866M658.5 833.7L653.9 858.8M672.9 826.9L668.2 851.8M686.9 820.2L682.3 844.9M700.8 813.6L696.2 838.1M714.4 807.1L709.9 831.4M727.8 800.7L723.3 824.8M740.9 794.5L736.5 818.4M753.9 788.3L749.4 812M766.6 782.3L762.2 805.7M779.1 776.3L774.8 799.6M791.5 770.4L787.1 793.5M803.6 764.6L799.3 787.6M815.6 758.9L811.3 781.7M827.3 753.3L823.1 775.9M838.9 747.8L834.7 770.2M850.3 742.4L846.1 764.6M861.6 737L857.4 759.1M872.6 731.8L868.5 753.7M883.5 726.6L879.4 748.3M894.3 721.5L890.2 743M904.8 716.4L900.8 737.8M915.3 711.5L911.2 732.7M925.5 706.6L921.5 727.7M935.7 701.8L931.7 722.7M945.7 697L941.7 717.8M955.5 692.3L951.5 712.9M965.2 687.7L961.3 708.2M974.8 683.1L970.8 703.5M984.2 678.7L980.3 698.8M993.5 674.2L989.6 694.3M1002.7 669.9L998.8 689.8M1011.7 665.6L1007.9 685.3M1020.7 661.3L1016.8 680.9M1029.5 657.1L1025.7 676.6M1038.2 653L1034.4 672.3M1046.7 648.9L1043 668.1M1055.2 644.9L1051.5 664M1063.6 640.9L1059.8 659.9M1071.8 637L1068.1 655.8M1079.9 633.1L1076.3 651.8M1088 629.3L1084.3 647.9M1095.9 625.5L1092.3 644M1103.7 621.8L1100.1 640.1M1111.5 618.1L1107.9 636.3M1119.1 614.4L1115.5 632.6M1126.6 610.8L1123.1 628.9M1134.1 607.3L1130.5 625.2M1141.4 603.8L1137.9 621.6M1148.7 600.3L1145.2 618M1155.9 596.9L1152.4 614.5M1163 593.5L1159.5 611M1170 590.2L1166.5 607.6M1176.9 586.9L1173.5 604.2M1183.8 583.6L1180.3 600.8M1190.5 580.4L1187.1 597.5M1197.2 577.2L1193.8 594.2M1203.8 574.1L1200.4 590.9M1210.3 571L1207 587.7M1216.8 567.9L1213.4 584.6M1223.2 564.9L1219.8 581.4M1229.5 561.9L1226.2 578.3M1235.7 558.9L1232.4 575.3M1241.9 556L1238.6 572.2M1248 553.1L1244.7 569.2M1254 550.2L1250.7 566.3M1260 547.4L1256.7 563.3M1265.9 544.5L1262.6 560.4M1271.7 541.8L1268.5 557.6M1277.5 539L1274.3 554.7M1283.2 536.3L1280 551.9M1288.9 533.6L1285.6 549.2M1294.4 531L1291.2 546.4M1300 528.3L1296.8 543.7M1305.4 525.7L1302.3 541M1310.9 523.1L1307.7 538.4M1316.2 520.6L1313.1 535.7M1321.5 518.1L1318.4 533.1M1326.8 515.6L1323.6 530.5M1331.9 513.1L1328.8 528" stroke="#ab8800" stroke-width="2.6" fill="none" opacity="0.9"/>
</g>
<polygon points="602,896.8 1287,556.8 1287,646.9 602,1046.1" fill="#4fb800" />
<g clip-path="url(#cg)"><path d="M592 907.8L1289 559.4M592 913.8L1289 563M592 919.8L1289 566.6M592 925.8L1289 570.2M592 931.8L1289 573.8M592 937.8L1289 577.4M592 943.8L1289 581M592 949.8L1289 584.6M592 955.8L1289 588.2M592 961.8L1289 591.8M592 967.9L1289 595.4M592 973.9L1289 599M592 979.9L1289 602.6M592 985.9L1289 606.2M592 991.9L1289 609.8M592 997.9L1289 613.4M592 1003.9L1289 617M592 1009.9L1289 620.6M592 1015.9L1289 624.2M592 1021.9L1289 627.7M592 1027.9L1289 631.3M592 1033.9L1289 634.9M592 1039.9L1289 638.5M592 1045.9L1289 642.1" stroke="#2f8300" stroke-width="1.15" fill="none"/></g>
<path d="M602.0 897.8 L1287.0 557.6" stroke="#3f9a00" stroke-width="1.6"/>
<path d="M930 855.7l2.9 5.4" stroke="#d81500" stroke-width="10.8" stroke-linecap="round"/>
<path d="M939.7 850.1l2.9 5.3" stroke="#d81500" stroke-width="10.7" stroke-linecap="round"/>
<path d="M949.2 844.5l2.8 5.3" stroke="#d81500" stroke-width="10.5" stroke-linecap="round"/>
<path d="M958.6 839.1l2.8 5.2" stroke="#d81500" stroke-width="10.4" stroke-linecap="round"/>
<path d="M967.9 833.7l2.7 5.1" stroke="#d81500" stroke-width="10.3" stroke-linecap="round"/>
<path d="M977.1 828.3l2.7 5.1" stroke="#d81500" stroke-width="10.1" stroke-linecap="round"/>
<path d="M986.1 823.1l2.7 5" stroke="#d81500" stroke-width="10.0" stroke-linecap="round"/>
<path d="M995 817.9l2.6 4.9" stroke="#d81500" stroke-width="9.9" stroke-linecap="round"/>
<path d="M1003.8 812.7l2.6 4.9" stroke="#d81500" stroke-width="9.7" stroke-linecap="round"/>
<path d="M1012.5 807.7l2.6 4.8" stroke="#d81500" stroke-width="9.6" stroke-linecap="round"/>
<path d="M1021.1 802.7l2.5 4.7" stroke="#d81500" stroke-width="9.5" stroke-linecap="round"/>
<path d="M1029.5 797.7l2.5 4.7" stroke="#d81500" stroke-width="9.4" stroke-linecap="round"/>
<path d="M1037.9 792.9l2.5 4.6" stroke="#d81500" stroke-width="9.2" stroke-linecap="round"/>
<path d="M1046.1 788.1l2.4 4.6" stroke="#d81500" stroke-width="9.1" stroke-linecap="round"/>
<path d="M1054.3 783.3l2.4 4.5" stroke="#d81500" stroke-width="9.0" stroke-linecap="round"/>
<path d="M1062.3 778.6l2.4 4.4" stroke="#d81500" stroke-width="8.9" stroke-linecap="round"/>
<path d="M1070.2 774l2.4 4.4" stroke="#d81500" stroke-width="8.8" stroke-linecap="round"/>
<path d="M1078.1 769.4l2.3 4.3" stroke="#d81500" stroke-width="8.7" stroke-linecap="round"/>
<path d="M1085.8 764.9l2.3 4.3" stroke="#d81500" stroke-width="8.6" stroke-linecap="round"/>
<path d="M1093.5 760.5l2.3 4.2" stroke="#d81500" stroke-width="8.5" stroke-linecap="round"/>
<path d="M1101 756.1l2.2 4.2" stroke="#d81500" stroke-width="8.4" stroke-linecap="round"/>
<path d="M1108.5 751.7l2.2 4.1" stroke="#d81500" stroke-width="8.3" stroke-linecap="round"/>
<path d="M1115.9 747.4l2.2 4.1" stroke="#d81500" stroke-width="8.2" stroke-linecap="round"/>
<path d="M1123.1 743.2l2.2 4" stroke="#d81500" stroke-width="8.1" stroke-linecap="round"/>
<path d="M1130.3 739l2.1 4" stroke="#d81500" stroke-width="8.0" stroke-linecap="round"/>
<path d="M1137.5 734.8l2.1 3.9" stroke="#d81500" stroke-width="7.9" stroke-linecap="round"/>
<path d="M1144.5 730.7l2.1 3.9" stroke="#d81500" stroke-width="7.8" stroke-linecap="round"/>
<path d="M1151.4 726.7l2.1 3.8" stroke="#d81500" stroke-width="7.7" stroke-linecap="round"/>
<path d="M1158.3 722.7l2 3.8" stroke="#d81500" stroke-width="7.6" stroke-linecap="round"/>
<path d="M1165.1 718.7l2 3.8" stroke="#d81500" stroke-width="7.5" stroke-linecap="round"/>
<path d="M1171.8 714.8l2 3.7" stroke="#d81500" stroke-width="7.4" stroke-linecap="round"/>
<path d="M1178.4 711l2 3.7" stroke="#d81500" stroke-width="7.3" stroke-linecap="round"/>
<path d="M1185 707.1l1.9 3.6" stroke="#d81500" stroke-width="7.3" stroke-linecap="round"/>
<path d="M1191.5 703.4l1.9 3.6" stroke="#d81500" stroke-width="7.2" stroke-linecap="round"/>
<path d="M1197.9 699.6l1.9 3.6" stroke="#d81500" stroke-width="7.1" stroke-linecap="round"/>
<path d="M1204.2 695.9l1.9 3.5" stroke="#d81500" stroke-width="7.0" stroke-linecap="round"/>
<path d="M1210.5 692.3l1.9 3.5" stroke="#d81500" stroke-width="6.9" stroke-linecap="round"/>
<path d="M1216.7 688.7l1.8 3.4" stroke="#d81500" stroke-width="6.9" stroke-linecap="round"/>
<path d="M1222.8 685.1l1.8 3.4" stroke="#d81500" stroke-width="6.8" stroke-linecap="round"/>
<path d="M1228.9 681.6l1.8 3.4" stroke="#d81500" stroke-width="6.7" stroke-linecap="round"/>
<path d="M1234.9 678.1l1.8 3.3" stroke="#d81500" stroke-width="6.6" stroke-linecap="round"/>
<path d="M1240.8 674.6l1.8 3.3" stroke="#d81500" stroke-width="6.6" stroke-linecap="round"/>
<path d="M1246.7 671.2l1.7 3.3" stroke="#d81500" stroke-width="6.5" stroke-linecap="round"/>
<path d="M1252.5 667.8l1.7 3.2" stroke="#d81500" stroke-width="6.4" stroke-linecap="round"/>
<path d="M1258.3 664.4l1.7 3.2" stroke="#d81500" stroke-width="6.4" stroke-linecap="round"/>
<path d="M1264 661.1l1.7 3.2" stroke="#d81500" stroke-width="6.3" stroke-linecap="round"/>
<path d="M1269.6 657.8l1.7 3.1" stroke="#d81500" stroke-width="6.2" stroke-linecap="round"/>
<path d="M1275.2 654.6l1.7 3.1" stroke="#d81500" stroke-width="6.2" stroke-linecap="round"/>
<path d="M1280.7 651.4l1.6 3.1" stroke="#d81500" stroke-width="6.1" stroke-linecap="round"/>
<path d="M1286.1 648.2l1.6 3" stroke="#d81500" stroke-width="6.0" stroke-linecap="round"/>
<path d="M1291.5 645.1l1.6 3" stroke="#d81500" stroke-width="6.0" stroke-linecap="round"/>
<path d="M1296.9 642l1.6 3" stroke="#d81500" stroke-width="5.9" stroke-linecap="round"/>
<polygon points="602,1041.6 1287,642.4 1287,647.5 602,1046.7" fill="#4fb800" />
<rect x="1283" y="219.5" width="4.5" height="29" fill="#c81400"/><rect x="1285" y="226" width="2.5" height="16" fill="#4fb800"/>
</g></svg>
<div class="r" style="left:607.2px;top:94.3px;width:113.7px;height:37.4px;background:rgba(18,18,20,0.5);"></div>
<div class="r" style="left:610px;top:97.2px;width:32px;height:32px;border:1px solid #fff;"></div>
<svg style="left:604px;top:92px" width="120" height="42" viewBox="604 92 120 42"><g transform="translate(625.6 113.3)"><g fill="none" stroke="#fff" stroke-width="3.3"><path d="M-1.900 -9.100 A9.300 9.300 0 0 0 -5.300 7.600"/><path d="M1.900 9.100 A9.300 9.300 0 0 0 5.300 -7.600"/></g><path d="M0.300 -8.900 L6.200 -12.300 L5.400 -4.800 Z" fill="#fff"/><path d="M-0.300 9.800 L-6.300 11.900 L-4.600 4.900 Z" fill="#fff"/></g><g stroke="#fff" stroke-width="2"><path d="M664 103.500 V123 M654 113.100 H674"/></g><path d="M664 99.300 L667.200 105 H660.800 Z M664 126.600 L667.200 121 H660.800 Z M649.600 113.100 L655.200 109.900 V116.300 Z M678.400 113.100 L672.800 109.900 V116.300 Z" fill="#fff"/><path d="M701.800 101.900 L710.300 105.400 L710.300 106.200 L705.200 106.200 C705.300 110.500 706 114.500 707.500 117.900 L715.300 117.900 L701.800 125.200 L688.300 117.900 L696.100 117.900 C697.600 114.500 698.300 110.500 698.400 106.200 L693.300 106.200 L693.300 105.400 Z" fill="#fff"/></svg>
<div class="r" style="left:607px;top:139px;width:98px;height:143px;background:rgba(18,18,20,0.5);"></div>
<div class="r" style="left:611px;top:141px;width:20px;height:20px;background:#0033ff;"></div>
<div class="t" style="left:636.0px;top:142.96px;font-size:16px;color:#fff;">16 mm/s</div>
<div class="r" style="left:611px;top:165px;width:20px;height:20px;background:#00ffff;"></div>
<div class="t" style="left:636.0px;top:166.96px;font-size:16px;color:#fff;">20 mm/s</div>
<div class="r" style="left:611px;top:189px;width:20px;height:20px;background:#00ff4c;"></div>
<div class="t" style="left:636.0px;top:190.96px;font-size:16px;color:#fff;">30 mm/s</div>
<div class="r" style="left:611px;top:213px;width:20px;height:20px;background:#66ff00;"></div>
<div class="t" style="left:636.0px;top:214.96px;font-size:16px;color:#fff;">40 mm/s</div>
<div class="r" style="left:611px;top:237px;width:20px;height:20px;background:#ffcc00;"></div>
<div class="t" style="left:636.0px;top:238.96px;font-size:16px;color:#fff;">50 mm/s</div>
<div class="r" style="left:611px;top:261px;width:20px;height:20px;background:#ff1a0d;"></div>
<div class="t" style="left:636.0px;top:262.96px;font-size:16px;color:#fff;">60 mm/s</div>
<div class="r" style="left:1161.1px;top:94.2px;width:75.8px;height:37.5px;background:rgba(18,18,20,0.5);"></div>
<div class="t" style="left:1167.3px;top:103.56px;font-size:19.3px;color:#fff;">2D</div>
<div class="r" style="left:1202px;top:97.2px;width:32px;height:32px;border:1px solid #fff;"></div>
<div class="t" style="left:1205.2px;top:103.56px;font-size:19.3px;color:#fff;">3D</div>
<div class="r" style="left:1262px;top:145px;width:10px;height:672px;background:#dcdcdc;"></div>
<div class="r" style="left:1260px;top:359px;width:14px;height:10px;background:#009a22;"></div>
<div class="r" style="left:672px;top:812px;width:565px;height:10px;background:#dcdcdc;"></div>
<div class="r" style="left:662px;top:810px;width:10px;height:14px;background:#009a22;"></div>
<div class="r" style="left:1237px;top:810px;width:10px;height:14px;background:#009a22;"></div>
<div class="r" style="left:1287.5px;top:89px;width:147.5px;height:751px;background:#444444;"></div>
<div class="r" style="left:1287.5px;top:839.5px;width:147.5px;height:1px;background:#e0e0e0;"></div>
<div class="r" style="left:1294px;top:97px;width:136px;height:38px;background:#6b6b6b;"></div>
<svg style="left:1307px;top:111px" width="16" height="11" viewBox="0 0 16 11"><path d="M2 2.200 L8 7.800 L14 2.200" fill="none" stroke="#fff" stroke-width="3.8"/></svg>
<div class="t" style="left:1331.0px;top:109.46px;font-size:16px;color:#fff;">MODEL</div>
<div class="t" style="left:1293.4px;top:142.74px;font-size:13.3px;color:#fff;">PRINT TIME:</div>
<div class="t" style="left:1293.4px;top:160.24px;font-size:18.5px;color:#fff;">1 h, 18 min</div>
<div class="t" style="left:1293.4px;top:188.44px;font-size:12.0px;color:#fff;">FILAMENT LENGTH:</div>
<div class="t" style="left:1293.4px;top:204.24px;font-size:18.5px;color:#fff;">6151.7 mm</div>
<div class="t" style="left:1293.4px;top:232.44px;font-size:12.0px;color:#fff;">FILAMENT VOLUME:</div>
<div class="t" style="left:1293.4px;top:248.14px;font-size:18.5px;color:#fff;">14.80 cm3</div>
<div class="t" style="left:1293.4px;top:275.99px;font-size:12.3px;color:#fff;">EST. WEIGHT:</div>
<div class="t" style="left:1293.4px;top:291.74px;font-size:18.5px;color:#fff;">18.35 g</div>
<svg style="left:1302.4px;top:337px" width="11" height="16" viewBox="0 0 11 16"><path d="M2.200 2 L8 8 L2.200 14" fill="none" stroke="#fff" stroke-width="3.8"/></svg>
<div class="t" style="left:1331.0px;top:336.14px;font-size:16.25px;color:#fff;">DISPLAY</div>
<div class="t" style="left:611.0px;top:856.06px;font-size:16px;color:#fff;">Generate</div>
<div class="t" style="left:690.0px;top:856.06px;font-size:16px;color:#fff;">&lt;&lt;</div>
<div class="t" style="left:719.5px;top:856.06px;font-size:16px;color:#fff;">25 / 36</div>
<div class="t" style="left:780.0px;top:856.06px;font-size:16px;color:#fff;">&gt;&gt;</div>
<div class="r" style="left:829.8px;top:855.6px;width:40.2px;height:17.4px;background:#fff;"></div>
<div class="t" style="left:832.3px;top:856.06px;font-size:16px;color:#111;">25</div>
<div class="t" style="left:881.0px;top:856.06px;font-size:16px;color:#fff;">Go</div>
</div></body></html>
